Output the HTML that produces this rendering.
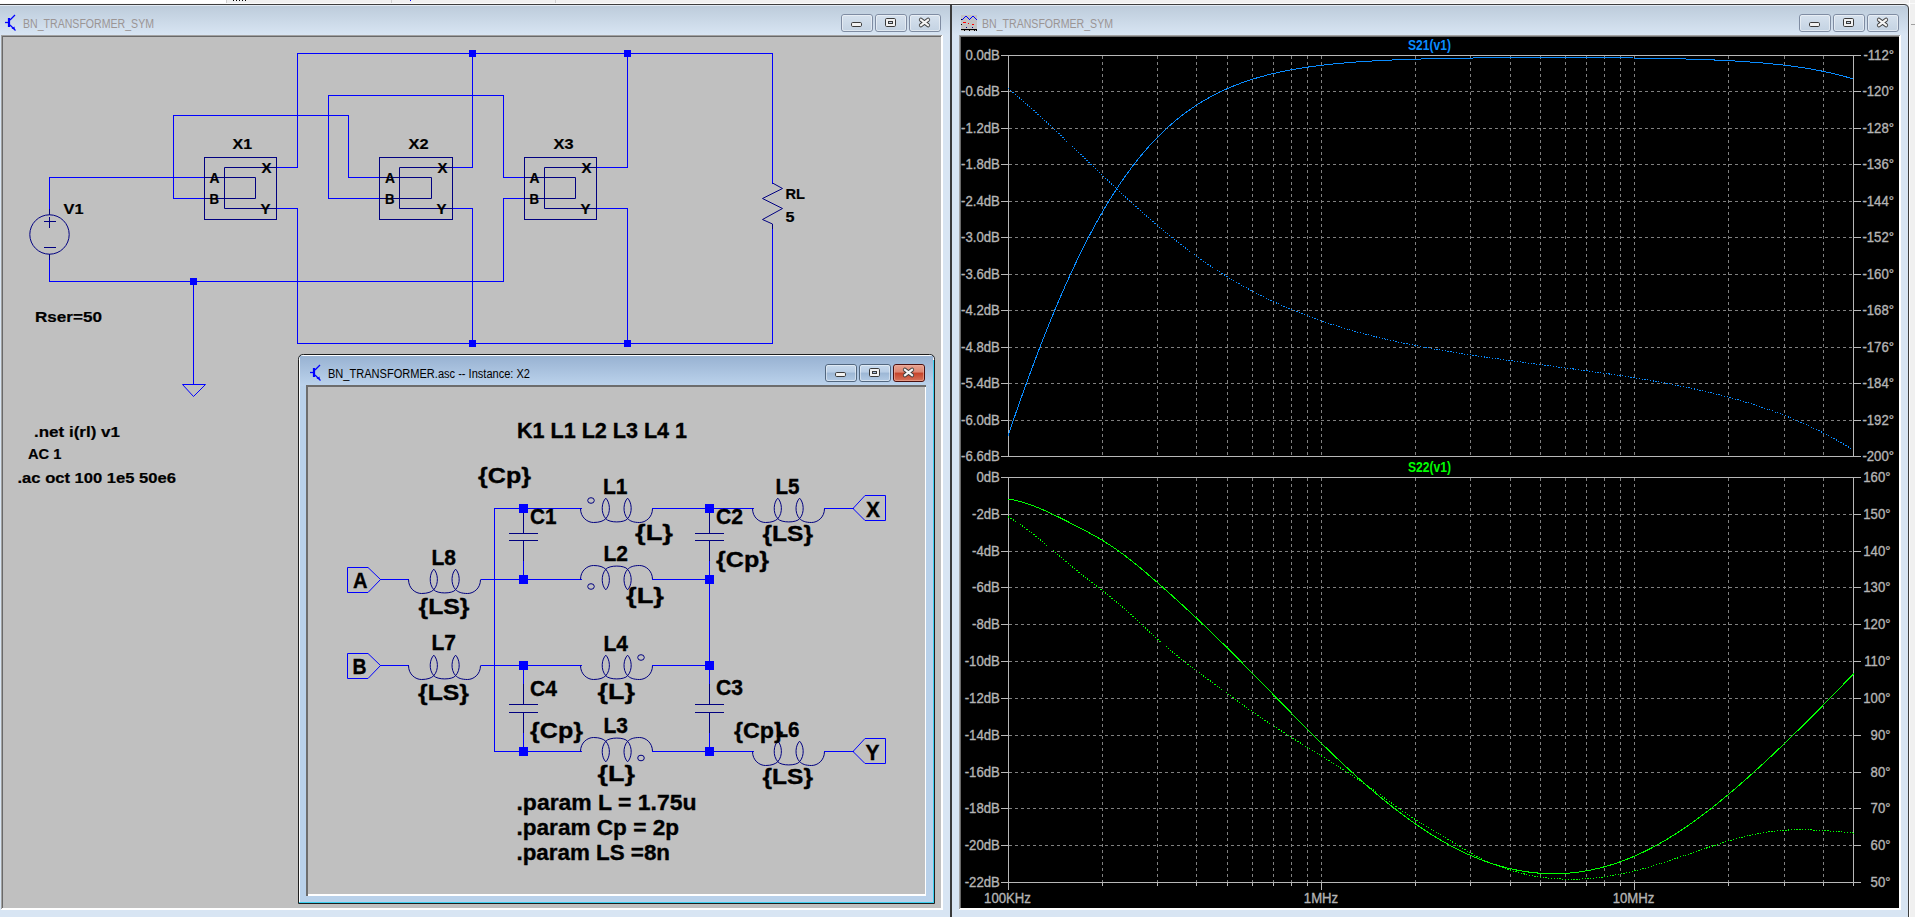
<!DOCTYPE html>
<html><head><meta charset="utf-8"><title>LTspice</title>
<style>html,body{margin:0;padding:0;width:1915px;height:917px;overflow:hidden;background:#f0f0f0;position:relative}</style>
</head><body>
<svg width="1915" height="917" viewBox="0 0 1915 917" style="position:absolute;left:0;top:0;font-family:'Liberation Sans', sans-serif">
<defs>
<linearGradient id="tbIn" x1="0" y1="0" x2="0" y2="1"><stop offset="0" stop-color="#bccbda"/><stop offset="1" stop-color="#d8e5f3"/></linearGradient>
<linearGradient id="tbAct" x1="0" y1="0" x2="0" y2="1"><stop offset="0" stop-color="#98b2d2"/><stop offset="1" stop-color="#bcd3ec"/></linearGradient>
<linearGradient id="btnIn" x1="0" y1="0" x2="0" y2="1"><stop offset="0" stop-color="#d7e2ee"/><stop offset="1" stop-color="#c3d2e2"/></linearGradient>
<linearGradient id="btnAct" x1="0" y1="0" x2="0" y2="1"><stop offset="0" stop-color="#c9dbee"/><stop offset="0.45" stop-color="#b8cde5"/><stop offset="0.5" stop-color="#9db7d5"/><stop offset="1" stop-color="#b3cbe5"/></linearGradient>
<linearGradient id="btnClose" x1="0" y1="0" x2="0" y2="1"><stop offset="0" stop-color="#e9a493"/><stop offset="0.45" stop-color="#dc8672"/><stop offset="0.5" stop-color="#c6432a"/><stop offset="1" stop-color="#d7775f"/></linearGradient>
</defs>
<rect x="0" y="0" width="1915" height="917" fill="#f0f0f0"/>
<rect x="0" y="0" width="226" height="3" fill="#ffffff"/>
<rect x="226" y="0" width="1" height="3" fill="#d0d0d0"/>
<rect x="391" y="0" width="1" height="3" fill="#d0d0d0"/>
<rect x="555" y="0" width="1" height="3" fill="#d0d0d0"/>
<rect x="0" y="3" width="1915" height="1" fill="#fafafa"/>
<rect x="233" y="0" width="1" height="1" fill="#000000"/>
<rect x="236" y="0" width="1" height="1" fill="#000000"/>
<rect x="239" y="0" width="1" height="1" fill="#000000"/>
<rect x="242" y="0" width="1" height="1" fill="#000000"/>
<rect x="245" y="0" width="1" height="1" fill="#000000"/>
<rect x="410" y="0" width="1" height="1" fill="#0000ff"/>
<rect x="1909" y="0" width="1" height="917" fill="#ffffff"/>
<rect x="1911" y="24" width="4" height="1" fill="#a0a0a0"/>
<rect x="0" y="4" width="951" height="913" fill="#d8e5f3"/>
<rect x="0" y="5" width="951" height="30" fill="url(#tbIn)"/>
<rect x="0" y="4" width="951" height="1" fill="#3e3e3e"/>
<rect x="0" y="5" width="951" height="1" fill="#e2eaf3"/>
<rect x="950" y="4" width="1" height="913" fill="#3a3a3a"/>
<rect x="1" y="35" width="942" height="875" fill="#ffffff"/>
<rect x="1" y="35" width="941" height="1" fill="#a2a2a2"/>
<rect x="1" y="35" width="1" height="874" fill="#a2a2a2"/>
<rect x="2" y="36" width="939" height="1" fill="#696969"/>
<rect x="2" y="36" width="1" height="872" fill="#696969"/>
<rect x="3" y="37" width="938" height="871" fill="#c0c0c0"/>
<path d="M951 4 H1904 Q1908 4 1908 8 V917 H951 Z" fill="#d8e5f3"/>
<rect x="951" y="5" width="957" height="30" fill="url(#tbIn)"/>
<rect x="951" y="5" width="954" height="1" fill="#e2eaf3"/>
<path d="M951 4.5 H1904 Q1908.5 4.5 1908.5 9 V917" fill="none" stroke="#3e3e3e" stroke-width="1"/>
<rect x="951" y="4" width="1" height="913" fill="#3a3a3a"/>
<rect x="959" y="35" width="942" height="875" fill="#ffffff"/>
<rect x="959" y="35" width="941" height="1" fill="#a2a2a2"/>
<rect x="959" y="35" width="1" height="874" fill="#a2a2a2"/>
<rect x="960" y="36" width="939" height="1" fill="#696969"/>
<rect x="960" y="36" width="1" height="872" fill="#696969"/>
<rect x="961" y="37" width="938" height="871" fill="#000000"/>
<rect x="841.5" y="14.5" width="31" height="17" rx="2.5" fill="url(#btnIn)" stroke="#7f8ca2"/>
<rect x="842.5" y="15.5" width="29" height="15" rx="1.5" fill="none" stroke="#ffffff" stroke-opacity="0.45"/>
<rect x="851.5" y="22.5" width="10" height="4" rx="1.2" fill="#f2f2f2" stroke="#3a3a3a"/>
<rect x="875.5" y="14.5" width="31" height="17" rx="2.5" fill="url(#btnIn)" stroke="#7f8ca2"/>
<rect x="876.5" y="15.5" width="29" height="15" rx="1.5" fill="none" stroke="#ffffff" stroke-opacity="0.45"/>
<rect x="885.5" y="18.5" width="10" height="8" rx="1.2" fill="#f2f2f2" stroke="#3a3a3a"/>
<rect x="888.5" y="21.5" width="4" height="2" fill="#c5d3e3" stroke="#3a3a3a"/>
<rect x="909.5" y="14.5" width="31" height="17" rx="2.5" fill="url(#btnIn)" stroke="#7f8ca2"/>
<rect x="910.5" y="15.5" width="29" height="15" rx="1.5" fill="none" stroke="#ffffff" stroke-opacity="0.45"/>
<path d="M921 19.8 L928 25.2 M928 19.8 L921 25.2" stroke="#3a3a3a" stroke-width="4.2" stroke-linecap="round"/>
<path d="M921 19.8 L928 25.2 M928 19.8 L921 25.2" stroke="#f4f4f4" stroke-width="2.2" stroke-linecap="square"/>
<rect x="1799.5" y="14.5" width="31" height="17" rx="2.5" fill="url(#btnIn)" stroke="#7f8ca2"/>
<rect x="1800.5" y="15.5" width="29" height="15" rx="1.5" fill="none" stroke="#ffffff" stroke-opacity="0.45"/>
<rect x="1809.5" y="22.5" width="10" height="4" rx="1.2" fill="#f2f2f2" stroke="#3a3a3a"/>
<rect x="1833.5" y="14.5" width="31" height="17" rx="2.5" fill="url(#btnIn)" stroke="#7f8ca2"/>
<rect x="1834.5" y="15.5" width="29" height="15" rx="1.5" fill="none" stroke="#ffffff" stroke-opacity="0.45"/>
<rect x="1843.5" y="18.5" width="10" height="8" rx="1.2" fill="#f2f2f2" stroke="#3a3a3a"/>
<rect x="1846.5" y="21.5" width="4" height="2" fill="#c5d3e3" stroke="#3a3a3a"/>
<rect x="1867.5" y="14.5" width="31" height="17" rx="2.5" fill="url(#btnIn)" stroke="#7f8ca2"/>
<rect x="1868.5" y="15.5" width="29" height="15" rx="1.5" fill="none" stroke="#ffffff" stroke-opacity="0.45"/>
<path d="M1879 19.8 L1886 25.2 M1886 19.8 L1879 25.2" stroke="#3a3a3a" stroke-width="4.2" stroke-linecap="round"/>
<path d="M1879 19.8 L1886 25.2 M1886 19.8 L1879 25.2" stroke="#f4f4f4" stroke-width="2.2" stroke-linecap="square"/>
<g fill="none" stroke="#0000ff"><path d="M5 22.5 H9" stroke-width="1.3"/><path d="M9 18 V27" stroke-width="2.2"/><path d="M10 20 L15 15" stroke-width="1.2"/><path d="M10 25 L15.5 30.5" stroke-width="1.2"/></g><path d="M11.5 28.5 L14.5 26.5 L14.8 29.5 Z" fill="#0000ff"/>
<text x="23" y="27.7" font-size="12" font-weight="normal" fill="#9b9595" text-anchor="start" textLength="131" lengthAdjust="spacingAndGlyphs">BN_TRANSFORMER_SYM</text>
<rect x="961" y="15" width="16" height="16" fill="#c3c3c3"/>
<rect x="962" y="19" width="1" height="1" fill="#0000ff"/>
<rect x="963" y="18" width="1" height="1" fill="#0000ff"/>
<rect x="964" y="17" width="1" height="1" fill="#0000ff"/>
<rect x="965" y="16" width="1" height="1" fill="#0000ff"/>
<rect x="966" y="16" width="1" height="1" fill="#0000ff"/>
<rect x="967" y="17" width="1" height="1" fill="#0000ff"/>
<rect x="968" y="18" width="1" height="1" fill="#0000ff"/>
<rect x="969" y="19" width="1" height="1" fill="#0000ff"/>
<rect x="970" y="18" width="1" height="1" fill="#0000ff"/>
<rect x="971" y="17" width="1" height="1" fill="#0000ff"/>
<rect x="972" y="16" width="1" height="1" fill="#0000ff"/>
<rect x="973" y="16" width="1" height="1" fill="#0000ff"/>
<rect x="974" y="17" width="1" height="1" fill="#0000ff"/>
<rect x="975" y="18" width="1" height="1" fill="#0000ff"/>
<rect x="976" y="19" width="1" height="1" fill="#0000ff"/>
<rect x="961" y="19" width="1" height="1" fill="#000"/>
<rect x="963" y="22" width="3" height="1" fill="#ff0000"/>
<rect x="968" y="23" width="1" height="1" fill="#ff0000"/>
<rect x="972" y="24" width="2" height="1" fill="#ff0000"/>
<rect x="961" y="24" width="1" height="1" fill="#000"/>
<rect x="966" y="27" width="1" height="1" fill="#000080"/>
<rect x="972" y="27" width="1" height="1" fill="#000080"/>
<rect x="961" y="29" width="16" height="1" fill="#000"/>
<rect x="964" y="30" width="1" height="1" fill="#000"/>
<rect x="969" y="30" width="1" height="1" fill="#000"/>
<rect x="974" y="30" width="1" height="1" fill="#000"/>
<rect x="976" y="30" width="1" height="1" fill="#000"/>
<text x="982" y="27.7" font-size="12" font-weight="normal" fill="#9b9595" text-anchor="start" textLength="131" lengthAdjust="spacingAndGlyphs">BN_TRANSFORMER_SYM</text>
<rect x="297" y="53" width="476" height="1" fill="#0000ff"/>
<rect x="297" y="53" width="1" height="115" fill="#0000ff"/>
<rect x="276" y="167" width="22" height="1" fill="#0000ff"/>
<rect x="772" y="53" width="1" height="131" fill="#0000ff"/>
<rect x="772" y="229" width="1" height="115" fill="#0000ff"/>
<rect x="297" y="343" width="476" height="1" fill="#0000ff"/>
<rect x="297" y="208" width="1" height="136" fill="#0000ff"/>
<rect x="276" y="208" width="22" height="1" fill="#0000ff"/>
<rect x="173" y="115" width="176" height="1" fill="#0000ff"/>
<rect x="173" y="115" width="1" height="84" fill="#0000ff"/>
<rect x="173" y="198" width="32" height="1" fill="#0000ff"/>
<rect x="348" y="115" width="1" height="63" fill="#0000ff"/>
<rect x="348" y="177" width="32" height="1" fill="#0000ff"/>
<rect x="328" y="95" width="176" height="1" fill="#0000ff"/>
<rect x="328" y="95" width="1" height="104" fill="#0000ff"/>
<rect x="328" y="198" width="52" height="1" fill="#0000ff"/>
<rect x="503" y="95" width="1" height="83" fill="#0000ff"/>
<rect x="503" y="177" width="22" height="1" fill="#0000ff"/>
<rect x="49" y="177" width="156" height="1" fill="#0000ff"/>
<rect x="49" y="177" width="1" height="33" fill="#0000ff"/>
<rect x="49" y="259" width="1" height="23" fill="#0000ff"/>
<rect x="49" y="281" width="455" height="1" fill="#0000ff"/>
<rect x="503" y="198" width="1" height="84" fill="#0000ff"/>
<rect x="503" y="198" width="22" height="1" fill="#0000ff"/>
<rect x="193" y="281" width="1" height="104" fill="#0000ff"/>
<rect x="452" y="167" width="21" height="1" fill="#0000ff"/>
<rect x="472" y="53" width="1" height="115" fill="#0000ff"/>
<rect x="452" y="208" width="21" height="1" fill="#0000ff"/>
<rect x="472" y="208" width="1" height="136" fill="#0000ff"/>
<rect x="597" y="167" width="31" height="1" fill="#0000ff"/>
<rect x="627" y="53" width="1" height="115" fill="#0000ff"/>
<rect x="597" y="208" width="31" height="1" fill="#0000ff"/>
<rect x="627" y="208" width="1" height="136" fill="#0000ff"/>
<rect x="469" y="50" width="7" height="7" fill="#0000ff"/>
<rect x="624" y="50" width="7" height="7" fill="#0000ff"/>
<rect x="469" y="340" width="7" height="7" fill="#0000ff"/>
<rect x="624" y="340" width="7" height="7" fill="#0000ff"/>
<rect x="190" y="278" width="7" height="7" fill="#0000ff"/>
<path d="M182.5 384.5 H205.5 L193.5 396.5 Z" fill="none" stroke="#0000ff" stroke-width="1"/>
<rect x="204.5" y="157.5" width="72" height="62" fill="none" stroke="#000080"/>
<path d="M204 177.5 H255.5 V198.5 H204" fill="none" stroke="#000080"/>
<path d="M276 167.5 H224.5 V208.5 H276" fill="none" stroke="#000080"/>
<text x="209.5" y="183" font-size="15" font-weight="bold" fill="#000" text-anchor="start" textLength="10" lengthAdjust="spacingAndGlyphs" stroke="#000" stroke-width="0.2">A</text>
<text x="209.5" y="204" font-size="15" font-weight="bold" fill="#000" text-anchor="start" textLength="9.5" lengthAdjust="spacingAndGlyphs" stroke="#000" stroke-width="0.2">B</text>
<text x="261.5" y="173" font-size="15" font-weight="bold" fill="#000" text-anchor="start" textLength="10" lengthAdjust="spacingAndGlyphs" stroke="#000" stroke-width="0.2">X</text>
<text x="260.5" y="214" font-size="15" font-weight="bold" fill="#000" text-anchor="start" textLength="10" lengthAdjust="spacingAndGlyphs" stroke="#000" stroke-width="0.2">Y</text>
<rect x="379.5" y="157.5" width="73" height="62" fill="none" stroke="#000080"/>
<path d="M379 177.5 H431.5 V198.5 H379" fill="none" stroke="#000080"/>
<path d="M452 167.5 H399.5 V208.5 H452" fill="none" stroke="#000080"/>
<text x="385.0" y="183" font-size="15" font-weight="bold" fill="#000" text-anchor="start" textLength="10" lengthAdjust="spacingAndGlyphs" stroke="#000" stroke-width="0.2">A</text>
<text x="385.0" y="204" font-size="15" font-weight="bold" fill="#000" text-anchor="start" textLength="9.5" lengthAdjust="spacingAndGlyphs" stroke="#000" stroke-width="0.2">B</text>
<text x="437.5" y="173" font-size="15" font-weight="bold" fill="#000" text-anchor="start" textLength="10" lengthAdjust="spacingAndGlyphs" stroke="#000" stroke-width="0.2">X</text>
<text x="436.5" y="214" font-size="15" font-weight="bold" fill="#000" text-anchor="start" textLength="10" lengthAdjust="spacingAndGlyphs" stroke="#000" stroke-width="0.2">Y</text>
<rect x="524.5" y="157.5" width="72" height="62" fill="none" stroke="#000080"/>
<path d="M524 177.5 H575.5 V198.5 H524" fill="none" stroke="#000080"/>
<path d="M596 167.5 H544.5 V208.5 H596" fill="none" stroke="#000080"/>
<text x="529.5" y="183" font-size="15" font-weight="bold" fill="#000" text-anchor="start" textLength="10" lengthAdjust="spacingAndGlyphs" stroke="#000" stroke-width="0.2">A</text>
<text x="529.5" y="204" font-size="15" font-weight="bold" fill="#000" text-anchor="start" textLength="9.5" lengthAdjust="spacingAndGlyphs" stroke="#000" stroke-width="0.2">B</text>
<text x="581.5" y="173" font-size="15" font-weight="bold" fill="#000" text-anchor="start" textLength="10" lengthAdjust="spacingAndGlyphs" stroke="#000" stroke-width="0.2">X</text>
<text x="580.5" y="214" font-size="15" font-weight="bold" fill="#000" text-anchor="start" textLength="10" lengthAdjust="spacingAndGlyphs" stroke="#000" stroke-width="0.2">Y</text>
<text x="232.5" y="149" font-size="15.5" font-weight="bold" fill="#000" text-anchor="start" textLength="19.5" lengthAdjust="spacingAndGlyphs" stroke="#000" stroke-width="0.2">X1</text>
<text x="408.5" y="149" font-size="15.5" font-weight="bold" fill="#000" text-anchor="start" textLength="20" lengthAdjust="spacingAndGlyphs" stroke="#000" stroke-width="0.2">X2</text>
<text x="553.5" y="149" font-size="15.5" font-weight="bold" fill="#000" text-anchor="start" textLength="20" lengthAdjust="spacingAndGlyphs" stroke="#000" stroke-width="0.2">X3</text>
<rect x="49" y="209" width="1" height="6" fill="#000080"/>
<rect x="49" y="254" width="1" height="6" fill="#000080"/>
<circle cx="49.5" cy="234.5" r="19.7" fill="none" stroke="#000080"/>
<rect x="44" y="221" width="12" height="1" fill="#000080"/>
<rect x="49" y="217" width="1" height="11" fill="#000080"/>
<rect x="44" y="247" width="12" height="1" fill="#000080"/>
<text x="63.5" y="214" font-size="15.5" font-weight="bold" fill="#000" text-anchor="start" textLength="20" lengthAdjust="spacingAndGlyphs" stroke="#000" stroke-width="0.2">V1</text>
<text x="35" y="322" font-size="15.5" font-weight="bold" fill="#000" text-anchor="start" textLength="67" lengthAdjust="spacingAndGlyphs" stroke="#000" stroke-width="0.2">Rser=50</text>
<path d="M772.5 183 L782.5 188.5 L762.5 198.5 L782.5 208.5 L762.5 219.5 L772.5 224 V229" fill="none" stroke="#000080"/>
<text x="785.5" y="199" font-size="15.5" font-weight="bold" fill="#000" text-anchor="start" textLength="19.5" lengthAdjust="spacingAndGlyphs" stroke="#000" stroke-width="0.2">RL</text>
<text x="785.5" y="222" font-size="15.5" font-weight="bold" fill="#000" text-anchor="start" textLength="9" lengthAdjust="spacingAndGlyphs" stroke="#000" stroke-width="0.2">5</text>
<text x="34" y="437" font-size="15.5" font-weight="bold" fill="#000" text-anchor="start" textLength="86" lengthAdjust="spacingAndGlyphs" stroke="#000" stroke-width="0.2">.net i(rl) v1</text>
<text x="28" y="459" font-size="15.5" font-weight="bold" fill="#000" text-anchor="start" textLength="33.5" lengthAdjust="spacingAndGlyphs" stroke="#000" stroke-width="0.2">AC 1</text>
<text x="17.5" y="483" font-size="15.5" font-weight="bold" fill="#000" text-anchor="start" textLength="158.5" lengthAdjust="spacingAndGlyphs" stroke="#000" stroke-width="0.2">.ac oct 100 1e5 50e6</text>
<path d="M298.5 903.5 V359.5 Q298.5 354.5 303.5 354.5 H929.5 Q934.5 354.5 934.5 359.5 V903.5 Z" fill="#b9d1ea" stroke="#1e1e1e"/>
<path d="M299.5 903 V360 Q299.5 355.5 304 355.5 H929 Q933.5 355.5 933.5 360" fill="none" stroke="#ffffff" stroke-width="1"/>
<rect x="300" y="356" width="633" height="30" fill="url(#tbAct)"/>
<rect x="933" y="360" width="1" height="543" fill="#3ad0f0"/>
<rect x="299" y="902" width="635" height="1" fill="#3ad0f0"/>
<rect x="306" y="385" width="620" height="511" fill="#6d6d6d"/>
<rect x="308" y="387" width="618" height="509" fill="#ffffff"/>
<rect x="308" y="387" width="617" height="507" fill="#c0c0c0"/>
<rect x="825.5" y="364.5" width="31" height="17" rx="2.5" fill="url(#btnAct)" stroke="#52677f"/>
<rect x="826.5" y="365.5" width="29" height="15" rx="1.5" fill="none" stroke="#ffffff" stroke-opacity="0.45"/>
<rect x="835.5" y="372.5" width="10" height="4" rx="1.2" fill="#f2f2f2" stroke="#3a3a3a"/>
<rect x="859.5" y="364.5" width="31" height="17" rx="2.5" fill="url(#btnAct)" stroke="#52677f"/>
<rect x="860.5" y="365.5" width="29" height="15" rx="1.5" fill="none" stroke="#ffffff" stroke-opacity="0.45"/>
<rect x="869.5" y="368.5" width="10" height="8" rx="1.2" fill="#f2f2f2" stroke="#3a3a3a"/>
<rect x="872.5" y="371.5" width="4" height="2" fill="#a9c0dc" stroke="#3a3a3a"/>
<rect x="893.5" y="364.5" width="31" height="17" rx="2.5" fill="url(#btnClose)" stroke="#4a1010"/>
<rect x="894.5" y="365.5" width="29" height="15" rx="1.5" fill="none" stroke="#f0b0a0" stroke-opacity="0.6"/>
<path d="M905 369.8 L912 375.2 M912 369.8 L905 375.2" stroke="#3a3a3a" stroke-width="4.2" stroke-linecap="round"/>
<path d="M905 369.8 L912 375.2 M912 369.8 L905 375.2" stroke="#f4f4f4" stroke-width="2.2" stroke-linecap="square"/>
<g fill="none" stroke="#0000ff"><path d="M310 372.5 H314" stroke-width="1.3"/><path d="M314 368 V377" stroke-width="2.2"/><path d="M315 370 L320 365" stroke-width="1.2"/><path d="M315 375 L320.5 380.5" stroke-width="1.2"/></g><path d="M316.5 378.5 L319.5 376.5 L319.8 379.5 Z" fill="#0000ff"/>
<text x="328" y="377.8" font-size="12" font-weight="normal" fill="#000000" text-anchor="start" textLength="202" lengthAdjust="spacingAndGlyphs">BN_TRANSFORMER.asc -- Instance: X2</text>
<path d="M347.5 567.5 H368 L380.5 579.5 L368 592.5 H347.5 Z" fill="none" stroke="#0000ff" stroke-width="1"/>
<rect x="380" y="579" width="29" height="1" fill="#0000ff"/>
<path d="M408.50 579.50 C408.50 588.50 415.50 593.50 421.50 593.50 C427.50 593.50 431.50 592.00 433.80 589.70 C439.30 583.50 437.80 573.00 433.80 569.20 C429.80 573.00 428.30 583.50 433.80 589.70 C437.00 594.00 452.50 594.00 455.60 589.70 C461.10 583.50 459.60 573.00 455.60 569.20 C451.60 573.00 450.10 583.50 455.60 589.70 C458.00 592.00 461.50 593.50 467.50 593.50 C473.50 593.50 480.50 588.50 480.50 579.50" fill="none" stroke="#000080" stroke-width="1"/>
<rect x="481" y="579" width="101" height="1" fill="#0000ff"/>
<path d="M580.50 579.50 C580.50 570.50 587.50 565.50 593.50 565.50 C599.50 565.50 603.50 567.00 605.80 569.30 C611.30 575.50 609.80 586.00 605.80 589.80 C601.80 586.00 600.30 575.50 605.80 569.30 C609.00 565.00 624.50 565.00 627.60 569.30 C633.10 575.50 631.60 586.00 627.60 589.80 C623.60 586.00 622.10 575.50 627.60 569.30 C630.00 567.00 633.50 565.50 639.50 565.50 C645.50 565.50 652.50 570.50 652.50 579.50" fill="none" stroke="#000080" stroke-width="1"/>
<ellipse cx="591" cy="586.5" rx="3.3" ry="2.8" fill="none" stroke="#000080" stroke-width="1"/>
<rect x="652" y="579" width="58" height="1" fill="#0000ff"/>
<path d="M347.5 653.5 H368 L380.5 665.5 L368 678.5 H347.5 Z" fill="none" stroke="#0000ff" stroke-width="1"/>
<rect x="380" y="665" width="29" height="1" fill="#0000ff"/>
<path d="M408.50 665.50 C408.50 674.50 415.50 679.50 421.50 679.50 C427.50 679.50 431.50 678.00 433.80 675.70 C439.30 669.50 437.80 659.00 433.80 655.20 C429.80 659.00 428.30 669.50 433.80 675.70 C437.00 680.00 452.50 680.00 455.60 675.70 C461.10 669.50 459.60 659.00 455.60 655.20 C451.60 659.00 450.10 669.50 455.60 675.70 C458.00 678.00 461.50 679.50 467.50 679.50 C473.50 679.50 480.50 674.50 480.50 665.50" fill="none" stroke="#000080" stroke-width="1"/>
<rect x="481" y="665" width="101" height="1" fill="#0000ff"/>
<path d="M580.50 665.50 C580.50 674.50 587.50 679.50 593.50 679.50 C599.50 679.50 603.50 678.00 605.80 675.70 C611.30 669.50 609.80 659.00 605.80 655.20 C601.80 659.00 600.30 669.50 605.80 675.70 C609.00 680.00 624.50 680.00 627.60 675.70 C633.10 669.50 631.60 659.00 627.60 655.20 C623.60 659.00 622.10 669.50 627.60 675.70 C630.00 678.00 633.50 679.50 639.50 679.50 C645.50 679.50 652.50 674.50 652.50 665.50" fill="none" stroke="#000080" stroke-width="1"/>
<ellipse cx="641" cy="657.5" rx="3.3" ry="2.8" fill="none" stroke="#000080" stroke-width="1"/>
<rect x="652" y="665" width="58" height="1" fill="#0000ff"/>
<rect x="494" y="508" width="88" height="1" fill="#0000ff"/>
<path d="M580.50 508.50 C580.50 517.50 587.50 522.50 593.50 522.50 C599.50 522.50 603.50 521.00 605.80 518.70 C611.30 512.50 609.80 502.00 605.80 498.20 C601.80 502.00 600.30 512.50 605.80 518.70 C609.00 523.00 624.50 523.00 627.60 518.70 C633.10 512.50 631.60 502.00 627.60 498.20 C623.60 502.00 622.10 512.50 627.60 518.70 C630.00 521.00 633.50 522.50 639.50 522.50 C645.50 522.50 652.50 517.50 652.50 508.50" fill="none" stroke="#000080" stroke-width="1"/>
<ellipse cx="591" cy="500.5" rx="3.3" ry="2.8" fill="none" stroke="#000080" stroke-width="1"/>
<rect x="652" y="508" width="102" height="1" fill="#0000ff"/>
<path d="M752.50 508.50 C752.50 517.50 759.50 522.50 765.50 522.50 C771.50 522.50 775.50 521.00 777.80 518.70 C783.30 512.50 781.80 502.00 777.80 498.20 C773.80 502.00 772.30 512.50 777.80 518.70 C781.00 523.00 796.50 523.00 799.60 518.70 C805.10 512.50 803.60 502.00 799.60 498.20 C795.60 502.00 794.10 512.50 799.60 518.70 C802.00 521.00 805.50 522.50 811.50 522.50 C817.50 522.50 824.50 517.50 824.50 508.50" fill="none" stroke="#000080" stroke-width="1"/>
<rect x="824" y="508" width="30" height="1" fill="#0000ff"/>
<path d="M853 508.5 L865 495.5 H885.5 V520.5 H865 Z" fill="none" stroke="#0000ff" stroke-width="1"/>
<rect x="494" y="751" width="88" height="1" fill="#0000ff"/>
<path d="M580.50 751.50 C580.50 742.50 587.50 737.50 593.50 737.50 C599.50 737.50 603.50 739.00 605.80 741.30 C611.30 747.50 609.80 758.00 605.80 761.80 C601.80 758.00 600.30 747.50 605.80 741.30 C609.00 737.00 624.50 737.00 627.60 741.30 C633.10 747.50 631.60 758.00 627.60 761.80 C623.60 758.00 622.10 747.50 627.60 741.30 C630.00 739.00 633.50 737.50 639.50 737.50 C645.50 737.50 652.50 742.50 652.50 751.50" fill="none" stroke="#000080" stroke-width="1"/>
<ellipse cx="641" cy="758" rx="3.3" ry="2.8" fill="none" stroke="#000080" stroke-width="1"/>
<rect x="652" y="751" width="102" height="1" fill="#0000ff"/>
<path d="M752.50 751.50 C752.50 760.50 759.50 765.50 765.50 765.50 C771.50 765.50 775.50 764.00 777.80 761.70 C783.30 755.50 781.80 745.00 777.80 741.20 C773.80 745.00 772.30 755.50 777.80 761.70 C781.00 766.00 796.50 766.00 799.60 761.70 C805.10 755.50 803.60 745.00 799.60 741.20 C795.60 745.00 794.10 755.50 799.60 761.70 C802.00 764.00 805.50 765.50 811.50 765.50 C817.50 765.50 824.50 760.50 824.50 751.50" fill="none" stroke="#000080" stroke-width="1"/>
<rect x="824" y="751" width="30" height="1" fill="#0000ff"/>
<path d="M853 751.5 L865 738.5 H885.5 V763.5 H865 Z" fill="none" stroke="#0000ff" stroke-width="1"/>
<rect x="494" y="508" width="1" height="244" fill="#0000ff"/>
<rect x="523" y="508" width="1" height="5" fill="#0000ff"/>
<rect x="523" y="513" width="1" height="21" fill="#000080"/>
<rect x="509" y="533" width="29" height="1" fill="#000080"/>
<rect x="509" y="540" width="29" height="1" fill="#000080"/>
<rect x="523" y="540" width="1" height="21" fill="#000080"/>
<rect x="523" y="561" width="1" height="19" fill="#0000ff"/>
<rect x="709" y="508" width="1" height="5" fill="#0000ff"/>
<rect x="709" y="513" width="1" height="21" fill="#000080"/>
<rect x="695" y="533" width="29" height="1" fill="#000080"/>
<rect x="695" y="540" width="29" height="1" fill="#000080"/>
<rect x="709" y="540" width="1" height="21" fill="#000080"/>
<rect x="709" y="561" width="1" height="19" fill="#0000ff"/>
<rect x="709" y="579" width="1" height="87" fill="#0000ff"/>
<rect x="523" y="665" width="1" height="19" fill="#0000ff"/>
<rect x="523" y="684" width="1" height="21" fill="#000080"/>
<rect x="509" y="704" width="29" height="1" fill="#000080"/>
<rect x="509" y="712" width="29" height="1" fill="#000080"/>
<rect x="523" y="712" width="1" height="21" fill="#000080"/>
<rect x="523" y="733" width="1" height="19" fill="#0000ff"/>
<rect x="709" y="665" width="1" height="19" fill="#0000ff"/>
<rect x="709" y="684" width="1" height="21" fill="#000080"/>
<rect x="695" y="704" width="29" height="1" fill="#000080"/>
<rect x="695" y="712" width="29" height="1" fill="#000080"/>
<rect x="709" y="712" width="1" height="21" fill="#000080"/>
<rect x="709" y="733" width="1" height="19" fill="#0000ff"/>
<rect x="519" y="504" width="9" height="9" fill="#0000ff"/>
<rect x="519" y="575" width="9" height="9" fill="#0000ff"/>
<rect x="705" y="504" width="9" height="9" fill="#0000ff"/>
<rect x="705" y="575" width="9" height="9" fill="#0000ff"/>
<rect x="519" y="661" width="9" height="9" fill="#0000ff"/>
<rect x="519" y="747" width="9" height="9" fill="#0000ff"/>
<rect x="705" y="661" width="9" height="9" fill="#0000ff"/>
<rect x="705" y="747" width="9" height="9" fill="#0000ff"/>
<text x="353" y="588" font-size="22" font-weight="bold" fill="#000" text-anchor="start" textLength="14.5" lengthAdjust="spacingAndGlyphs" stroke="#000" stroke-width="0.35">A</text>
<text x="352.5" y="674" font-size="22" font-weight="bold" fill="#000" text-anchor="start" textLength="14" lengthAdjust="spacingAndGlyphs" stroke="#000" stroke-width="0.35">B</text>
<text x="866" y="517" font-size="22" font-weight="bold" fill="#000" text-anchor="start" textLength="14" lengthAdjust="spacingAndGlyphs" stroke="#000" stroke-width="0.35">X</text>
<text x="865.5" y="760" font-size="22" font-weight="bold" fill="#000" text-anchor="start" textLength="14" lengthAdjust="spacingAndGlyphs" stroke="#000" stroke-width="0.35">Y</text>
<text x="517" y="438" font-size="22" font-weight="bold" fill="#000" text-anchor="start" textLength="170" lengthAdjust="spacingAndGlyphs" stroke="#000" stroke-width="0.35">K1 L1 L2 L3 L4 1</text>
<text x="478" y="483" font-size="22" font-weight="bold" fill="#000" text-anchor="start" textLength="53" lengthAdjust="spacingAndGlyphs" stroke="#000" stroke-width="0.35">{Cp}</text>
<text x="530" y="524" font-size="22" font-weight="bold" fill="#000" text-anchor="start" textLength="26.5" lengthAdjust="spacingAndGlyphs" stroke="#000" stroke-width="0.35">C1</text>
<text x="603" y="494" font-size="22" font-weight="bold" fill="#000" text-anchor="start" textLength="24.5" lengthAdjust="spacingAndGlyphs" stroke="#000" stroke-width="0.35">L1</text>
<text x="635" y="540" font-size="22" font-weight="bold" fill="#000" text-anchor="start" textLength="38" lengthAdjust="spacingAndGlyphs" stroke="#000" stroke-width="0.35">{L}</text>
<text x="431.5" y="565" font-size="22" font-weight="bold" fill="#000" text-anchor="start" textLength="24.5" lengthAdjust="spacingAndGlyphs" stroke="#000" stroke-width="0.35">L8</text>
<text x="603.5" y="561" font-size="22" font-weight="bold" fill="#000" text-anchor="start" textLength="24.5" lengthAdjust="spacingAndGlyphs" stroke="#000" stroke-width="0.35">L2</text>
<text x="626" y="603" font-size="22" font-weight="bold" fill="#000" text-anchor="start" textLength="38" lengthAdjust="spacingAndGlyphs" stroke="#000" stroke-width="0.35">{L}</text>
<text x="418.5" y="614" font-size="22" font-weight="bold" fill="#000" text-anchor="start" textLength="51" lengthAdjust="spacingAndGlyphs" stroke="#000" stroke-width="0.35">{LS}</text>
<text x="716" y="524" font-size="22" font-weight="bold" fill="#000" text-anchor="start" textLength="27" lengthAdjust="spacingAndGlyphs" stroke="#000" stroke-width="0.35">C2</text>
<text x="716" y="567" font-size="22" font-weight="bold" fill="#000" text-anchor="start" textLength="53" lengthAdjust="spacingAndGlyphs" stroke="#000" stroke-width="0.35">{Cp}</text>
<text x="775.5" y="494" font-size="22" font-weight="bold" fill="#000" text-anchor="start" textLength="24" lengthAdjust="spacingAndGlyphs" stroke="#000" stroke-width="0.35">L5</text>
<text x="762.5" y="541" font-size="22" font-weight="bold" fill="#000" text-anchor="start" textLength="50.5" lengthAdjust="spacingAndGlyphs" stroke="#000" stroke-width="0.35">{LS}</text>
<text x="431.5" y="650" font-size="22" font-weight="bold" fill="#000" text-anchor="start" textLength="24.5" lengthAdjust="spacingAndGlyphs" stroke="#000" stroke-width="0.35">L7</text>
<text x="418" y="700" font-size="22" font-weight="bold" fill="#000" text-anchor="start" textLength="51" lengthAdjust="spacingAndGlyphs" stroke="#000" stroke-width="0.35">{LS}</text>
<text x="603.5" y="651" font-size="22" font-weight="bold" fill="#000" text-anchor="start" textLength="24.5" lengthAdjust="spacingAndGlyphs" stroke="#000" stroke-width="0.35">L4</text>
<text x="597.5" y="699" font-size="22" font-weight="bold" fill="#000" text-anchor="start" textLength="37.5" lengthAdjust="spacingAndGlyphs" stroke="#000" stroke-width="0.35">{L}</text>
<text x="530" y="696" font-size="22" font-weight="bold" fill="#000" text-anchor="start" textLength="27" lengthAdjust="spacingAndGlyphs" stroke="#000" stroke-width="0.35">C4</text>
<text x="530" y="738" font-size="22" font-weight="bold" fill="#000" text-anchor="start" textLength="53" lengthAdjust="spacingAndGlyphs" stroke="#000" stroke-width="0.35">{Cp}</text>
<text x="716" y="695" font-size="22" font-weight="bold" fill="#000" text-anchor="start" textLength="27" lengthAdjust="spacingAndGlyphs" stroke="#000" stroke-width="0.35">C3</text>
<text x="603.5" y="733" font-size="22" font-weight="bold" fill="#000" text-anchor="start" textLength="24.5" lengthAdjust="spacingAndGlyphs" stroke="#000" stroke-width="0.35">L3</text>
<text x="597.5" y="781" font-size="22" font-weight="bold" fill="#000" text-anchor="start" textLength="37.5" lengthAdjust="spacingAndGlyphs" stroke="#000" stroke-width="0.35">{L}</text>
<text x="734" y="738" font-size="22" font-weight="bold" fill="#000" text-anchor="start" textLength="49" lengthAdjust="spacingAndGlyphs" stroke="#000" stroke-width="0.35">{Cp}</text>
<text x="775.5" y="737" font-size="22" font-weight="bold" fill="#000" text-anchor="start" textLength="24" lengthAdjust="spacingAndGlyphs" stroke="#000" stroke-width="0.35">L6</text>
<text x="762.5" y="784" font-size="22" font-weight="bold" fill="#000" text-anchor="start" textLength="50.5" lengthAdjust="spacingAndGlyphs" stroke="#000" stroke-width="0.35">{LS}</text>
<text x="516.5" y="810" font-size="22" font-weight="bold" fill="#000" text-anchor="start" textLength="180" lengthAdjust="spacingAndGlyphs" stroke="#000" stroke-width="0.35">.param L = 1.75u</text>
<text x="516.5" y="835" font-size="22" font-weight="bold" fill="#000" text-anchor="start" textLength="162.5" lengthAdjust="spacingAndGlyphs" stroke="#000" stroke-width="0.35">.param Cp = 2p</text>
<text x="516.5" y="860" font-size="22" font-weight="bold" fill="#000" text-anchor="start" textLength="153.5" lengthAdjust="spacingAndGlyphs" stroke="#000" stroke-width="0.35">.param LS =8n</text>
<line x1="1009" y1="91.5" x2="1853" y2="91.5" stroke="#808080" stroke-dasharray="3 3"/>
<line x1="1009" y1="128.5" x2="1853" y2="128.5" stroke="#808080" stroke-dasharray="3 3"/>
<line x1="1009" y1="164.5" x2="1853" y2="164.5" stroke="#808080" stroke-dasharray="3 3"/>
<line x1="1009" y1="201.5" x2="1853" y2="201.5" stroke="#808080" stroke-dasharray="3 3"/>
<line x1="1009" y1="237.5" x2="1853" y2="237.5" stroke="#808080" stroke-dasharray="3 3"/>
<line x1="1009" y1="274.5" x2="1853" y2="274.5" stroke="#808080" stroke-dasharray="3 3"/>
<line x1="1009" y1="310.5" x2="1853" y2="310.5" stroke="#808080" stroke-dasharray="3 3"/>
<line x1="1009" y1="347.5" x2="1853" y2="347.5" stroke="#808080" stroke-dasharray="3 3"/>
<line x1="1009" y1="383.5" x2="1853" y2="383.5" stroke="#808080" stroke-dasharray="3 3"/>
<line x1="1009" y1="420.5" x2="1853" y2="420.5" stroke="#808080" stroke-dasharray="3 3"/>
<line x1="1102.5" y1="56" x2="1102.5" y2="456" stroke="#808080" stroke-dasharray="3 3"/>
<line x1="1157.5" y1="56" x2="1157.5" y2="456" stroke="#808080" stroke-dasharray="3 3"/>
<line x1="1196.5" y1="56" x2="1196.5" y2="456" stroke="#808080" stroke-dasharray="3 3"/>
<line x1="1227.5" y1="56" x2="1227.5" y2="456" stroke="#808080" stroke-dasharray="3 3"/>
<line x1="1252.5" y1="56" x2="1252.5" y2="456" stroke="#808080" stroke-dasharray="3 3"/>
<line x1="1273.5" y1="56" x2="1273.5" y2="456" stroke="#808080" stroke-dasharray="3 3"/>
<line x1="1291.5" y1="56" x2="1291.5" y2="456" stroke="#808080" stroke-dasharray="3 3"/>
<line x1="1307.5" y1="56" x2="1307.5" y2="456" stroke="#808080" stroke-dasharray="3 3"/>
<line x1="1321.5" y1="56" x2="1321.5" y2="456" stroke="#808080" stroke-dasharray="3 3"/>
<line x1="1415.5" y1="56" x2="1415.5" y2="456" stroke="#808080" stroke-dasharray="3 3"/>
<line x1="1470.5" y1="56" x2="1470.5" y2="456" stroke="#808080" stroke-dasharray="3 3"/>
<line x1="1510.5" y1="56" x2="1510.5" y2="456" stroke="#808080" stroke-dasharray="3 3"/>
<line x1="1540.5" y1="56" x2="1540.5" y2="456" stroke="#808080" stroke-dasharray="3 3"/>
<line x1="1565.5" y1="56" x2="1565.5" y2="456" stroke="#808080" stroke-dasharray="3 3"/>
<line x1="1586.5" y1="56" x2="1586.5" y2="456" stroke="#808080" stroke-dasharray="3 3"/>
<line x1="1604.5" y1="56" x2="1604.5" y2="456" stroke="#808080" stroke-dasharray="3 3"/>
<line x1="1620.5" y1="56" x2="1620.5" y2="456" stroke="#808080" stroke-dasharray="3 3"/>
<line x1="1634.5" y1="56" x2="1634.5" y2="456" stroke="#808080" stroke-dasharray="3 3"/>
<line x1="1728.5" y1="56" x2="1728.5" y2="456" stroke="#808080" stroke-dasharray="3 3"/>
<line x1="1784.5" y1="56" x2="1784.5" y2="456" stroke="#808080" stroke-dasharray="3 3"/>
<line x1="1823.5" y1="56" x2="1823.5" y2="456" stroke="#808080" stroke-dasharray="3 3"/>
<rect x="1001" y="55" width="860" height="1" fill="#b8b8b8"/>
<rect x="1001" y="456" width="860" height="1" fill="#b8b8b8"/>
<rect x="1008" y="55" width="1" height="402" fill="#b8b8b8"/>
<rect x="1853" y="55" width="1" height="402" fill="#b8b8b8"/>
<rect x="1001" y="91" width="8" height="1" fill="#b8b8b8"/>
<rect x="1853" y="91" width="8" height="1" fill="#b8b8b8"/>
<rect x="1001" y="128" width="8" height="1" fill="#b8b8b8"/>
<rect x="1853" y="128" width="8" height="1" fill="#b8b8b8"/>
<rect x="1001" y="164" width="8" height="1" fill="#b8b8b8"/>
<rect x="1853" y="164" width="8" height="1" fill="#b8b8b8"/>
<rect x="1001" y="201" width="8" height="1" fill="#b8b8b8"/>
<rect x="1853" y="201" width="8" height="1" fill="#b8b8b8"/>
<rect x="1001" y="237" width="8" height="1" fill="#b8b8b8"/>
<rect x="1853" y="237" width="8" height="1" fill="#b8b8b8"/>
<rect x="1001" y="274" width="8" height="1" fill="#b8b8b8"/>
<rect x="1853" y="274" width="8" height="1" fill="#b8b8b8"/>
<rect x="1001" y="310" width="8" height="1" fill="#b8b8b8"/>
<rect x="1853" y="310" width="8" height="1" fill="#b8b8b8"/>
<rect x="1001" y="347" width="8" height="1" fill="#b8b8b8"/>
<rect x="1853" y="347" width="8" height="1" fill="#b8b8b8"/>
<rect x="1001" y="383" width="8" height="1" fill="#b8b8b8"/>
<rect x="1853" y="383" width="8" height="1" fill="#b8b8b8"/>
<rect x="1001" y="420" width="8" height="1" fill="#b8b8b8"/>
<rect x="1853" y="420" width="8" height="1" fill="#b8b8b8"/>
<text transform="translate(999.8 60) scale(0.94 1)" font-size="14" fill="#b4b4b4" stroke="#b4b4b4" stroke-width="0.35" text-anchor="end">0.0dB</text>
<text transform="translate(1894 60) scale(0.94 1)" font-size="14" fill="#b4b4b4" stroke="#b4b4b4" stroke-width="0.35" text-anchor="end">-112°</text>
<text transform="translate(999.8 96) scale(0.94 1)" font-size="14" fill="#b4b4b4" stroke="#b4b4b4" stroke-width="0.35" text-anchor="end">-0.6dB</text>
<text transform="translate(1894 96) scale(0.94 1)" font-size="14" fill="#b4b4b4" stroke="#b4b4b4" stroke-width="0.35" text-anchor="end">-120°</text>
<text transform="translate(999.8 133) scale(0.94 1)" font-size="14" fill="#b4b4b4" stroke="#b4b4b4" stroke-width="0.35" text-anchor="end">-1.2dB</text>
<text transform="translate(1894 133) scale(0.94 1)" font-size="14" fill="#b4b4b4" stroke="#b4b4b4" stroke-width="0.35" text-anchor="end">-128°</text>
<text transform="translate(999.8 169) scale(0.94 1)" font-size="14" fill="#b4b4b4" stroke="#b4b4b4" stroke-width="0.35" text-anchor="end">-1.8dB</text>
<text transform="translate(1894 169) scale(0.94 1)" font-size="14" fill="#b4b4b4" stroke="#b4b4b4" stroke-width="0.35" text-anchor="end">-136°</text>
<text transform="translate(999.8 206) scale(0.94 1)" font-size="14" fill="#b4b4b4" stroke="#b4b4b4" stroke-width="0.35" text-anchor="end">-2.4dB</text>
<text transform="translate(1894 206) scale(0.94 1)" font-size="14" fill="#b4b4b4" stroke="#b4b4b4" stroke-width="0.35" text-anchor="end">-144°</text>
<text transform="translate(999.8 242) scale(0.94 1)" font-size="14" fill="#b4b4b4" stroke="#b4b4b4" stroke-width="0.35" text-anchor="end">-3.0dB</text>
<text transform="translate(1894 242) scale(0.94 1)" font-size="14" fill="#b4b4b4" stroke="#b4b4b4" stroke-width="0.35" text-anchor="end">-152°</text>
<text transform="translate(999.8 279) scale(0.94 1)" font-size="14" fill="#b4b4b4" stroke="#b4b4b4" stroke-width="0.35" text-anchor="end">-3.6dB</text>
<text transform="translate(1894 279) scale(0.94 1)" font-size="14" fill="#b4b4b4" stroke="#b4b4b4" stroke-width="0.35" text-anchor="end">-160°</text>
<text transform="translate(999.8 315) scale(0.94 1)" font-size="14" fill="#b4b4b4" stroke="#b4b4b4" stroke-width="0.35" text-anchor="end">-4.2dB</text>
<text transform="translate(1894 315) scale(0.94 1)" font-size="14" fill="#b4b4b4" stroke="#b4b4b4" stroke-width="0.35" text-anchor="end">-168°</text>
<text transform="translate(999.8 352) scale(0.94 1)" font-size="14" fill="#b4b4b4" stroke="#b4b4b4" stroke-width="0.35" text-anchor="end">-4.8dB</text>
<text transform="translate(1894 352) scale(0.94 1)" font-size="14" fill="#b4b4b4" stroke="#b4b4b4" stroke-width="0.35" text-anchor="end">-176°</text>
<text transform="translate(999.8 388) scale(0.94 1)" font-size="14" fill="#b4b4b4" stroke="#b4b4b4" stroke-width="0.35" text-anchor="end">-5.4dB</text>
<text transform="translate(1894 388) scale(0.94 1)" font-size="14" fill="#b4b4b4" stroke="#b4b4b4" stroke-width="0.35" text-anchor="end">-184°</text>
<text transform="translate(999.8 425) scale(0.94 1)" font-size="14" fill="#b4b4b4" stroke="#b4b4b4" stroke-width="0.35" text-anchor="end">-6.0dB</text>
<text transform="translate(1894 425) scale(0.94 1)" font-size="14" fill="#b4b4b4" stroke="#b4b4b4" stroke-width="0.35" text-anchor="end">-192°</text>
<text transform="translate(999.8 461) scale(0.94 1)" font-size="14" fill="#b4b4b4" stroke="#b4b4b4" stroke-width="0.35" text-anchor="end">-6.6dB</text>
<text transform="translate(1894 461) scale(0.94 1)" font-size="14" fill="#b4b4b4" stroke="#b4b4b4" stroke-width="0.35" text-anchor="end">-200°</text>
<line x1="1009" y1="514.5" x2="1853" y2="514.5" stroke="#808080" stroke-dasharray="3 3"/>
<line x1="1009" y1="551.5" x2="1853" y2="551.5" stroke="#808080" stroke-dasharray="3 3"/>
<line x1="1009" y1="587.5" x2="1853" y2="587.5" stroke="#808080" stroke-dasharray="3 3"/>
<line x1="1009" y1="624.5" x2="1853" y2="624.5" stroke="#808080" stroke-dasharray="3 3"/>
<line x1="1009" y1="661.5" x2="1853" y2="661.5" stroke="#808080" stroke-dasharray="3 3"/>
<line x1="1009" y1="698.5" x2="1853" y2="698.5" stroke="#808080" stroke-dasharray="3 3"/>
<line x1="1009" y1="735.5" x2="1853" y2="735.5" stroke="#808080" stroke-dasharray="3 3"/>
<line x1="1009" y1="772.5" x2="1853" y2="772.5" stroke="#808080" stroke-dasharray="3 3"/>
<line x1="1009" y1="808.5" x2="1853" y2="808.5" stroke="#808080" stroke-dasharray="3 3"/>
<line x1="1009" y1="845.5" x2="1853" y2="845.5" stroke="#808080" stroke-dasharray="3 3"/>
<line x1="1102.5" y1="478" x2="1102.5" y2="882" stroke="#808080" stroke-dasharray="3 3"/>
<line x1="1157.5" y1="478" x2="1157.5" y2="882" stroke="#808080" stroke-dasharray="3 3"/>
<line x1="1196.5" y1="478" x2="1196.5" y2="882" stroke="#808080" stroke-dasharray="3 3"/>
<line x1="1227.5" y1="478" x2="1227.5" y2="882" stroke="#808080" stroke-dasharray="3 3"/>
<line x1="1252.5" y1="478" x2="1252.5" y2="882" stroke="#808080" stroke-dasharray="3 3"/>
<line x1="1273.5" y1="478" x2="1273.5" y2="882" stroke="#808080" stroke-dasharray="3 3"/>
<line x1="1291.5" y1="478" x2="1291.5" y2="882" stroke="#808080" stroke-dasharray="3 3"/>
<line x1="1307.5" y1="478" x2="1307.5" y2="882" stroke="#808080" stroke-dasharray="3 3"/>
<line x1="1321.5" y1="478" x2="1321.5" y2="882" stroke="#808080" stroke-dasharray="3 3"/>
<line x1="1415.5" y1="478" x2="1415.5" y2="882" stroke="#808080" stroke-dasharray="3 3"/>
<line x1="1470.5" y1="478" x2="1470.5" y2="882" stroke="#808080" stroke-dasharray="3 3"/>
<line x1="1510.5" y1="478" x2="1510.5" y2="882" stroke="#808080" stroke-dasharray="3 3"/>
<line x1="1540.5" y1="478" x2="1540.5" y2="882" stroke="#808080" stroke-dasharray="3 3"/>
<line x1="1565.5" y1="478" x2="1565.5" y2="882" stroke="#808080" stroke-dasharray="3 3"/>
<line x1="1586.5" y1="478" x2="1586.5" y2="882" stroke="#808080" stroke-dasharray="3 3"/>
<line x1="1604.5" y1="478" x2="1604.5" y2="882" stroke="#808080" stroke-dasharray="3 3"/>
<line x1="1620.5" y1="478" x2="1620.5" y2="882" stroke="#808080" stroke-dasharray="3 3"/>
<line x1="1634.5" y1="478" x2="1634.5" y2="882" stroke="#808080" stroke-dasharray="3 3"/>
<line x1="1728.5" y1="478" x2="1728.5" y2="882" stroke="#808080" stroke-dasharray="3 3"/>
<line x1="1784.5" y1="478" x2="1784.5" y2="882" stroke="#808080" stroke-dasharray="3 3"/>
<line x1="1823.5" y1="478" x2="1823.5" y2="882" stroke="#808080" stroke-dasharray="3 3"/>
<rect x="1001" y="477" width="860" height="1" fill="#b8b8b8"/>
<rect x="1001" y="882" width="860" height="1" fill="#b8b8b8"/>
<rect x="1008" y="477" width="1" height="406" fill="#b8b8b8"/>
<rect x="1853" y="477" width="1" height="406" fill="#b8b8b8"/>
<rect x="1001" y="514" width="8" height="1" fill="#b8b8b8"/>
<rect x="1853" y="514" width="8" height="1" fill="#b8b8b8"/>
<rect x="1001" y="551" width="8" height="1" fill="#b8b8b8"/>
<rect x="1853" y="551" width="8" height="1" fill="#b8b8b8"/>
<rect x="1001" y="587" width="8" height="1" fill="#b8b8b8"/>
<rect x="1853" y="587" width="8" height="1" fill="#b8b8b8"/>
<rect x="1001" y="624" width="8" height="1" fill="#b8b8b8"/>
<rect x="1853" y="624" width="8" height="1" fill="#b8b8b8"/>
<rect x="1001" y="661" width="8" height="1" fill="#b8b8b8"/>
<rect x="1853" y="661" width="8" height="1" fill="#b8b8b8"/>
<rect x="1001" y="698" width="8" height="1" fill="#b8b8b8"/>
<rect x="1853" y="698" width="8" height="1" fill="#b8b8b8"/>
<rect x="1001" y="735" width="8" height="1" fill="#b8b8b8"/>
<rect x="1853" y="735" width="8" height="1" fill="#b8b8b8"/>
<rect x="1001" y="772" width="8" height="1" fill="#b8b8b8"/>
<rect x="1853" y="772" width="8" height="1" fill="#b8b8b8"/>
<rect x="1001" y="808" width="8" height="1" fill="#b8b8b8"/>
<rect x="1853" y="808" width="8" height="1" fill="#b8b8b8"/>
<rect x="1001" y="845" width="8" height="1" fill="#b8b8b8"/>
<rect x="1853" y="845" width="8" height="1" fill="#b8b8b8"/>
<text transform="translate(999.8 482) scale(0.94 1)" font-size="14" fill="#b4b4b4" stroke="#b4b4b4" stroke-width="0.35" text-anchor="end">0dB</text>
<text transform="translate(1890.5 482) scale(0.94 1)" font-size="14" fill="#b4b4b4" stroke="#b4b4b4" stroke-width="0.35" text-anchor="end">160°</text>
<text transform="translate(999.8 519) scale(0.94 1)" font-size="14" fill="#b4b4b4" stroke="#b4b4b4" stroke-width="0.35" text-anchor="end">-2dB</text>
<text transform="translate(1890.5 519) scale(0.94 1)" font-size="14" fill="#b4b4b4" stroke="#b4b4b4" stroke-width="0.35" text-anchor="end">150°</text>
<text transform="translate(999.8 556) scale(0.94 1)" font-size="14" fill="#b4b4b4" stroke="#b4b4b4" stroke-width="0.35" text-anchor="end">-4dB</text>
<text transform="translate(1890.5 556) scale(0.94 1)" font-size="14" fill="#b4b4b4" stroke="#b4b4b4" stroke-width="0.35" text-anchor="end">140°</text>
<text transform="translate(999.8 592) scale(0.94 1)" font-size="14" fill="#b4b4b4" stroke="#b4b4b4" stroke-width="0.35" text-anchor="end">-6dB</text>
<text transform="translate(1890.5 592) scale(0.94 1)" font-size="14" fill="#b4b4b4" stroke="#b4b4b4" stroke-width="0.35" text-anchor="end">130°</text>
<text transform="translate(999.8 629) scale(0.94 1)" font-size="14" fill="#b4b4b4" stroke="#b4b4b4" stroke-width="0.35" text-anchor="end">-8dB</text>
<text transform="translate(1890.5 629) scale(0.94 1)" font-size="14" fill="#b4b4b4" stroke="#b4b4b4" stroke-width="0.35" text-anchor="end">120°</text>
<text transform="translate(999.8 666) scale(0.94 1)" font-size="14" fill="#b4b4b4" stroke="#b4b4b4" stroke-width="0.35" text-anchor="end">-10dB</text>
<text transform="translate(1890.5 666) scale(0.94 1)" font-size="14" fill="#b4b4b4" stroke="#b4b4b4" stroke-width="0.35" text-anchor="end">110°</text>
<text transform="translate(999.8 703) scale(0.94 1)" font-size="14" fill="#b4b4b4" stroke="#b4b4b4" stroke-width="0.35" text-anchor="end">-12dB</text>
<text transform="translate(1890.5 703) scale(0.94 1)" font-size="14" fill="#b4b4b4" stroke="#b4b4b4" stroke-width="0.35" text-anchor="end">100°</text>
<text transform="translate(999.8 740) scale(0.94 1)" font-size="14" fill="#b4b4b4" stroke="#b4b4b4" stroke-width="0.35" text-anchor="end">-14dB</text>
<text transform="translate(1890.5 740) scale(0.94 1)" font-size="14" fill="#b4b4b4" stroke="#b4b4b4" stroke-width="0.35" text-anchor="end">90°</text>
<text transform="translate(999.8 777) scale(0.94 1)" font-size="14" fill="#b4b4b4" stroke="#b4b4b4" stroke-width="0.35" text-anchor="end">-16dB</text>
<text transform="translate(1890.5 777) scale(0.94 1)" font-size="14" fill="#b4b4b4" stroke="#b4b4b4" stroke-width="0.35" text-anchor="end">80°</text>
<text transform="translate(999.8 813) scale(0.94 1)" font-size="14" fill="#b4b4b4" stroke="#b4b4b4" stroke-width="0.35" text-anchor="end">-18dB</text>
<text transform="translate(1890.5 813) scale(0.94 1)" font-size="14" fill="#b4b4b4" stroke="#b4b4b4" stroke-width="0.35" text-anchor="end">70°</text>
<text transform="translate(999.8 850) scale(0.94 1)" font-size="14" fill="#b4b4b4" stroke="#b4b4b4" stroke-width="0.35" text-anchor="end">-20dB</text>
<text transform="translate(1890.5 850) scale(0.94 1)" font-size="14" fill="#b4b4b4" stroke="#b4b4b4" stroke-width="0.35" text-anchor="end">60°</text>
<text transform="translate(999.8 887) scale(0.94 1)" font-size="14" fill="#b4b4b4" stroke="#b4b4b4" stroke-width="0.35" text-anchor="end">-22dB</text>
<text transform="translate(1890.5 887) scale(0.94 1)" font-size="14" fill="#b4b4b4" stroke="#b4b4b4" stroke-width="0.35" text-anchor="end">50°</text>
<rect x="1102" y="882" width="1" height="4" fill="#b8b8b8"/>
<rect x="1157" y="882" width="1" height="4" fill="#b8b8b8"/>
<rect x="1196" y="882" width="1" height="4" fill="#b8b8b8"/>
<rect x="1227" y="882" width="1" height="4" fill="#b8b8b8"/>
<rect x="1252" y="882" width="1" height="4" fill="#b8b8b8"/>
<rect x="1273" y="882" width="1" height="4" fill="#b8b8b8"/>
<rect x="1291" y="882" width="1" height="4" fill="#b8b8b8"/>
<rect x="1307" y="882" width="1" height="4" fill="#b8b8b8"/>
<rect x="1321" y="882" width="1" height="4" fill="#b8b8b8"/>
<rect x="1415" y="882" width="1" height="4" fill="#b8b8b8"/>
<rect x="1470" y="882" width="1" height="4" fill="#b8b8b8"/>
<rect x="1510" y="882" width="1" height="4" fill="#b8b8b8"/>
<rect x="1540" y="882" width="1" height="4" fill="#b8b8b8"/>
<rect x="1565" y="882" width="1" height="4" fill="#b8b8b8"/>
<rect x="1586" y="882" width="1" height="4" fill="#b8b8b8"/>
<rect x="1604" y="882" width="1" height="4" fill="#b8b8b8"/>
<rect x="1620" y="882" width="1" height="4" fill="#b8b8b8"/>
<rect x="1634" y="882" width="1" height="4" fill="#b8b8b8"/>
<rect x="1728" y="882" width="1" height="4" fill="#b8b8b8"/>
<rect x="1784" y="882" width="1" height="4" fill="#b8b8b8"/>
<rect x="1823" y="882" width="1" height="4" fill="#b8b8b8"/>
<rect x="1853" y="882" width="1" height="4" fill="#b8b8b8"/>
<rect x="1853" y="882" width="1" height="4" fill="#b8b8b8"/>
<rect x="1008" y="882" width="1" height="8" fill="#b8b8b8"/>
<rect x="1321" y="882" width="1" height="8" fill="#b8b8b8"/>
<rect x="1634" y="882" width="1" height="8" fill="#b8b8b8"/>
<text transform="translate(1007.5 902.7) scale(0.94 1)" font-size="14" fill="#b4b4b4" stroke="#b4b4b4" stroke-width="0.35" text-anchor="middle">100KHz</text>
<text transform="translate(1321 902.7) scale(0.94 1)" font-size="14" fill="#b4b4b4" stroke="#b4b4b4" stroke-width="0.35" text-anchor="middle">1MHz</text>
<text transform="translate(1633.5 902.7) scale(0.94 1)" font-size="14" fill="#b4b4b4" stroke="#b4b4b4" stroke-width="0.35" text-anchor="middle">10MHz</text>
<text x="1429.5" y="50" font-size="14" font-weight="bold" fill="#0a8cff" text-anchor="middle" textLength="43" lengthAdjust="spacingAndGlyphs">S21(v1)</text>
<text x="1429.5" y="472" font-size="14" font-weight="bold" fill="#00ff00" text-anchor="middle" textLength="43" lengthAdjust="spacingAndGlyphs">S22(v1)</text>
<svg x="1008" y="55" width="846" height="402" viewBox="1008 55 846 402" overflow="hidden">
<polyline points="1008.00,435.95 1009.41,431.79 1010.82,427.66 1012.23,423.54 1013.63,419.45 1015.04,415.38 1016.45,411.33 1017.86,407.30 1019.27,403.30 1020.67,399.31 1022.08,395.35 1023.49,391.41 1024.90,387.50 1026.31,383.61 1027.72,379.74 1029.12,375.89 1030.53,372.07 1031.94,368.27 1033.35,364.50 1034.76,360.75 1036.17,357.02 1037.58,353.32 1038.98,349.65 1040.39,346.00 1041.80,342.37 1043.21,338.77 1044.62,335.20 1046.03,331.65 1047.43,328.13 1048.84,324.63 1050.25,321.16 1051.66,317.72 1053.07,314.30 1054.47,310.91 1055.88,307.54 1057.29,304.21 1058.70,300.90 1060.11,297.61 1061.52,294.36 1062.92,291.13 1064.33,287.93 1065.74,284.75 1067.15,281.61 1068.56,278.49 1069.97,275.40 1071.38,272.33 1072.78,269.30 1074.19,266.29 1075.60,263.31 1077.01,260.36 1078.42,257.44 1079.83,254.54 1081.23,251.68 1082.64,248.84 1084.05,246.03 1085.46,243.25 1086.87,240.50 1088.28,237.77 1089.68,235.07 1091.09,232.41 1092.50,229.77 1093.91,227.15 1095.32,224.57 1096.72,222.01 1098.13,219.49 1099.54,216.99 1100.95,214.52 1102.36,212.08 1103.77,209.66 1105.17,207.27 1106.58,204.91 1107.99,202.58 1109.40,200.28 1110.81,198.00 1112.22,195.75 1113.62,193.53 1115.03,191.34 1116.44,189.17 1117.85,187.03 1119.26,184.92 1120.67,182.83 1122.08,180.77 1123.48,178.74 1124.89,176.73 1126.30,174.75 1127.71,172.80 1129.12,170.87 1130.53,168.97 1131.93,167.09 1133.34,165.24 1134.75,163.41 1136.16,161.61 1137.57,159.83 1138.97,158.08 1140.38,156.36 1141.79,154.65 1143.20,152.97 1144.61,151.32 1146.02,149.69 1147.42,148.08 1148.83,146.50 1150.24,144.94 1151.65,143.40 1153.06,141.89 1154.47,140.39 1155.88,138.92 1157.28,137.48 1158.69,136.05 1160.10,134.65 1161.51,133.26 1162.92,131.90 1164.33,130.56 1165.73,129.24 1167.14,127.95 1168.55,126.67 1169.96,125.41 1171.37,124.17 1172.78,122.95 1174.18,121.75 1175.59,120.57 1177.00,119.41 1178.41,118.27 1179.82,117.15 1181.22,116.04 1182.63,114.96 1184.04,113.89 1185.45,112.84 1186.86,111.81 1188.27,110.79 1189.67,109.79 1191.08,108.81 1192.49,107.84 1193.90,106.89 1195.31,105.96 1196.72,105.04 1198.12,104.14 1199.53,103.25 1200.94,102.38 1202.35,101.53 1203.76,100.69 1205.17,99.86 1206.58,99.05 1207.98,98.25 1209.39,97.47 1210.80,96.70 1212.21,95.94 1213.62,95.20 1215.03,94.47 1216.43,93.75 1217.84,93.05 1219.25,92.36 1220.66,91.68 1222.07,91.01 1223.47,90.36 1224.88,89.71 1226.29,89.08 1227.70,88.46 1229.11,87.85 1230.52,87.26 1231.92,86.67 1233.33,86.09 1234.74,85.53 1236.15,84.98 1237.56,84.43 1238.97,83.90 1240.38,83.37 1241.78,82.86 1243.19,82.35 1244.60,81.86 1246.01,81.37 1247.42,80.89 1248.83,80.43 1250.23,79.97 1251.64,79.52 1253.05,79.07 1254.46,78.64 1255.87,78.21 1257.28,77.80 1258.68,77.39 1260.09,76.98 1261.50,76.59 1262.91,76.20 1264.32,75.82 1265.72,75.45 1267.13,75.09 1268.54,74.73 1269.95,74.38 1271.36,74.03 1272.77,73.69 1274.17,73.36 1275.58,73.04 1276.99,72.72 1278.40,72.41 1279.81,72.10 1281.22,71.80 1282.62,71.50 1284.03,71.22 1285.44,70.93 1286.85,70.65 1288.26,70.38 1289.67,70.12 1291.08,69.85 1292.48,69.60 1293.89,69.35 1295.30,69.10 1296.71,68.86 1298.12,68.62 1299.53,68.39 1300.93,68.16 1302.34,67.94 1303.75,67.72 1305.16,67.50 1306.57,67.29 1307.97,67.08 1309.38,66.88 1310.79,66.68 1312.20,66.49 1313.61,66.30 1315.02,66.11 1316.42,65.93 1317.83,65.75 1319.24,65.57 1320.65,65.40 1322.06,65.23 1323.47,65.07 1324.88,64.91 1326.28,64.75 1327.69,64.59 1329.10,64.44 1330.51,64.29 1331.92,64.14 1333.33,64.00 1334.73,63.86 1336.14,63.72 1337.55,63.58 1338.96,63.45 1340.37,63.32 1341.78,63.19 1343.18,63.07 1344.59,62.95 1346.00,62.83 1347.41,62.71 1348.82,62.60 1350.23,62.48 1351.63,62.37 1353.04,62.26 1354.45,62.16 1355.86,62.06 1357.27,61.95 1358.67,61.85 1360.08,61.76 1361.49,61.66 1362.90,61.57 1364.31,61.48 1365.72,61.39 1367.12,61.30 1368.53,61.21 1369.94,61.13 1371.35,61.04 1372.76,60.96 1374.17,60.88 1375.58,60.81 1376.98,60.73 1378.39,60.65 1379.80,60.58 1381.21,60.51 1382.62,60.44 1384.03,60.37 1385.43,60.30 1386.84,60.24 1388.25,60.17 1389.66,60.11 1391.07,60.05 1392.47,59.99 1393.88,59.93 1395.29,59.87 1396.70,59.81 1398.11,59.76 1399.52,59.70 1400.92,59.65 1402.33,59.60 1403.74,59.54 1405.15,59.49 1406.56,59.44 1407.97,59.40 1409.38,59.35 1410.78,59.30 1412.19,59.26 1413.60,59.21 1415.01,59.17 1416.42,59.13 1417.83,59.09 1419.23,59.05 1420.64,59.01 1422.05,58.97 1423.46,58.93 1424.87,58.89 1426.28,58.86 1427.68,58.82 1429.09,58.78 1430.50,58.75 1431.91,58.72 1433.32,58.68 1434.73,58.65 1436.13,58.62 1437.54,58.59 1438.95,58.56 1440.36,58.53 1441.77,58.50 1443.17,58.47 1444.58,58.45 1445.99,58.42 1447.40,58.39 1448.81,58.37 1450.22,58.34 1451.62,58.32 1453.03,58.29 1454.44,58.27 1455.85,58.25 1457.26,58.22 1458.67,58.20 1460.08,58.18 1461.48,58.16 1462.89,58.14 1464.30,58.12 1465.71,58.10 1467.12,58.08 1468.53,58.06 1469.93,58.05 1471.34,58.03 1472.75,58.01 1474.16,57.99 1475.57,57.98 1476.98,57.96 1478.38,57.95 1479.79,57.93 1481.20,57.92 1482.61,57.90 1484.02,57.89 1485.42,57.87 1486.83,57.86 1488.24,57.85 1489.65,57.84 1491.06,57.82 1492.47,57.81 1493.88,57.80 1495.28,57.79 1496.69,57.78 1498.10,57.77 1499.51,57.76 1500.92,57.75 1502.33,57.74 1503.73,57.73 1505.14,57.72 1506.55,57.71 1507.96,57.70 1509.37,57.69 1510.78,57.69 1512.18,57.68 1513.59,57.67 1515.00,57.66 1516.41,57.66 1517.82,57.65 1519.22,57.65 1520.63,57.64 1522.04,57.63 1523.45,57.63 1524.86,57.62 1526.27,57.62 1527.68,57.61 1529.08,57.61 1530.49,57.61 1531.90,57.60 1533.31,57.60 1534.72,57.60 1536.12,57.59 1537.53,57.59 1538.94,57.59 1540.35,57.58 1541.76,57.58 1543.17,57.58 1544.57,57.58 1545.98,57.58 1547.39,57.58 1548.80,57.58 1550.21,57.57 1551.62,57.57 1553.03,57.57 1554.43,57.57 1555.84,57.57 1557.25,57.58 1558.66,57.58 1560.07,57.58 1561.47,57.58 1562.88,57.58 1564.29,57.58 1565.70,57.58 1567.11,57.59 1568.52,57.59 1569.93,57.59 1571.33,57.59 1572.74,57.60 1574.15,57.60 1575.56,57.60 1576.97,57.61 1578.38,57.61 1579.78,57.62 1581.19,57.62 1582.60,57.63 1584.01,57.63 1585.42,57.64 1586.83,57.64 1588.23,57.65 1589.64,57.66 1591.05,57.66 1592.46,57.67 1593.87,57.68 1595.28,57.68 1596.68,57.69 1598.09,57.70 1599.50,57.71 1600.91,57.72 1602.32,57.72 1603.72,57.73 1605.13,57.74 1606.54,57.75 1607.95,57.76 1609.36,57.77 1610.77,57.78 1612.17,57.80 1613.58,57.81 1614.99,57.82 1616.40,57.83 1617.81,57.84 1619.22,57.86 1620.62,57.87 1622.03,57.88 1623.44,57.90 1624.85,57.91 1626.26,57.93 1627.67,57.94 1629.07,57.96 1630.48,57.97 1631.89,57.99 1633.30,58.00 1634.71,58.02 1636.12,58.04 1637.53,58.06 1638.93,58.08 1640.34,58.09 1641.75,58.11 1643.16,58.13 1644.57,58.15 1645.97,58.17 1647.38,58.20 1648.79,58.22 1650.20,58.24 1651.61,58.26 1653.02,58.29 1654.43,58.31 1655.83,58.33 1657.24,58.36 1658.65,58.38 1660.06,58.41 1661.47,58.44 1662.88,58.46 1664.28,58.49 1665.69,58.52 1667.10,58.55 1668.51,58.58 1669.92,58.61 1671.32,58.64 1672.73,58.67 1674.14,58.70 1675.55,58.74 1676.96,58.77 1678.37,58.81 1679.78,58.84 1681.18,58.88 1682.59,58.92 1684.00,58.95 1685.41,58.99 1686.82,59.03 1688.22,59.07 1689.63,59.11 1691.04,59.15 1692.45,59.20 1693.86,59.24 1695.27,59.29 1696.68,59.33 1698.08,59.38 1699.49,59.43 1700.90,59.48 1702.31,59.53 1703.72,59.58 1705.12,59.63 1706.53,59.68 1707.94,59.74 1709.35,59.79 1710.76,59.85 1712.17,59.91 1713.57,59.97 1714.98,60.03 1716.39,60.09 1717.80,60.15 1719.21,60.21 1720.62,60.28 1722.03,60.35 1723.43,60.41 1724.84,60.48 1726.25,60.56 1727.66,60.63 1729.07,60.70 1730.47,60.78 1731.88,60.85 1733.29,60.93 1734.70,61.01 1736.11,61.10 1737.52,61.18 1738.93,61.27 1740.33,61.35 1741.74,61.44 1743.15,61.53 1744.56,61.63 1745.97,61.72 1747.38,61.82 1748.78,61.92 1750.19,62.02 1751.60,62.12 1753.01,62.23 1754.42,62.33 1755.83,62.44 1757.23,62.55 1758.64,62.67 1760.05,62.79 1761.46,62.90 1762.87,63.03 1764.28,63.15 1765.68,63.28 1767.09,63.40 1768.50,63.54 1769.91,63.67 1771.32,63.81 1772.72,63.95 1774.13,64.09 1775.54,64.24 1776.95,64.38 1778.36,64.54 1779.77,64.69 1781.18,64.85 1782.58,65.01 1783.99,65.17 1785.40,65.34 1786.81,65.51 1788.22,65.69 1789.62,65.86 1791.03,66.05 1792.44,66.23 1793.85,66.42 1795.26,66.61 1796.67,66.81 1798.08,67.01 1799.48,67.22 1800.89,67.42 1802.30,67.64 1803.71,67.86 1805.12,68.08 1806.53,68.30 1807.93,68.53 1809.34,68.77 1810.75,69.01 1812.16,69.26 1813.57,69.50 1814.97,69.76 1816.38,70.02 1817.79,70.28 1819.20,70.56 1820.61,70.83 1822.02,71.11 1823.43,71.40 1824.83,71.69 1826.24,71.99 1827.65,72.29 1829.06,72.60 1830.47,72.92 1831.88,73.24 1833.28,73.57 1834.69,73.91 1836.10,74.25 1837.51,74.60 1838.92,74.95 1840.32,75.32 1841.73,75.69 1843.14,76.06 1844.55,76.45 1845.96,76.84 1847.37,77.24 1848.78,77.65 1850.18,78.06 1851.59,78.48 1853.00,78.91" fill="none" stroke="#0a8cff" stroke-width="1" shape-rendering="crispEdges"/>
<polyline points="1008.00,88.44 1009.41,89.59 1010.82,90.75 1012.23,91.92 1013.63,93.10 1015.04,94.28 1016.45,95.47 1017.86,96.66 1019.27,97.86 1020.67,99.06 1022.08,100.27 1023.49,101.49 1024.90,102.71 1026.31,103.93 1027.72,105.17 1029.12,106.40 1030.53,107.65 1031.94,108.89 1033.35,110.14 1034.76,111.40 1036.17,112.66 1037.58,113.93 1038.98,115.20 1040.39,116.48 1041.80,117.76 1043.21,119.04 1044.62,120.33 1046.03,121.63 1047.43,122.92 1048.84,124.22 1050.25,125.53 1051.66,126.83 1053.07,128.15 1054.47,129.46 1055.88,130.78 1057.29,132.10 1058.70,133.42 1060.11,134.75 1061.52,136.08 1062.92,137.41 1064.33,138.75 1065.74,140.09 1067.15,141.42 1068.56,142.77 1069.97,144.11 1071.38,145.45 1072.78,146.80 1074.19,148.15 1075.60,149.50 1077.01,150.85 1078.42,152.20 1079.83,153.55 1081.23,154.91 1082.64,156.26 1084.05,157.62 1085.46,158.97 1086.87,160.33 1088.28,161.68 1089.68,163.04 1091.09,164.39 1092.50,165.75 1093.91,167.10 1095.32,168.45 1096.72,169.81 1098.13,171.16 1099.54,172.51 1100.95,173.86 1102.36,175.21 1103.77,176.55 1105.17,177.90 1106.58,179.24 1107.99,180.58 1109.40,181.92 1110.81,183.26 1112.22,184.59 1113.62,185.92 1115.03,187.25 1116.44,188.58 1117.85,189.90 1119.26,191.23 1120.67,192.54 1122.08,193.86 1123.48,195.17 1124.89,196.48 1126.30,197.78 1127.71,199.08 1129.12,200.38 1130.53,201.67 1131.93,202.96 1133.34,204.24 1134.75,205.52 1136.16,206.80 1137.57,208.07 1138.97,209.34 1140.38,210.60 1141.79,211.85 1143.20,213.11 1144.61,214.35 1146.02,215.60 1147.42,216.83 1148.83,218.07 1150.24,219.29 1151.65,220.51 1153.06,221.73 1154.47,222.94 1155.88,224.14 1157.28,225.34 1158.69,226.53 1160.10,227.72 1161.51,228.90 1162.92,230.08 1164.33,231.24 1165.73,232.41 1167.14,233.56 1168.55,234.71 1169.96,235.86 1171.37,237.00 1172.78,238.13 1174.18,239.25 1175.59,240.37 1177.00,241.48 1178.41,242.59 1179.82,243.69 1181.22,244.78 1182.63,245.87 1184.04,246.94 1185.45,248.02 1186.86,249.08 1188.27,250.14 1189.67,251.19 1191.08,252.24 1192.49,253.28 1193.90,254.31 1195.31,255.33 1196.72,256.35 1198.12,257.36 1199.53,258.36 1200.94,259.36 1202.35,260.35 1203.76,261.33 1205.17,262.31 1206.58,263.28 1207.98,264.24 1209.39,265.20 1210.80,266.15 1212.21,267.09 1213.62,268.02 1215.03,268.95 1216.43,269.87 1217.84,270.79 1219.25,271.69 1220.66,272.59 1222.07,273.49 1223.47,274.37 1224.88,275.25 1226.29,276.13 1227.70,276.99 1229.11,277.85 1230.52,278.70 1231.92,279.55 1233.33,280.39 1234.74,281.22 1236.15,282.05 1237.56,282.87 1238.97,283.68 1240.38,284.49 1241.78,285.29 1243.19,286.08 1244.60,286.87 1246.01,287.65 1247.42,288.42 1248.83,289.19 1250.23,289.95 1251.64,290.70 1253.05,291.45 1254.46,292.19 1255.87,292.93 1257.28,293.66 1258.68,294.38 1260.09,295.10 1261.50,295.81 1262.91,296.51 1264.32,297.21 1265.72,297.91 1267.13,298.59 1268.54,299.27 1269.95,299.95 1271.36,300.62 1272.77,301.28 1274.17,301.94 1275.58,302.59 1276.99,303.24 1278.40,303.88 1279.81,304.51 1281.22,305.14 1282.62,305.77 1284.03,306.39 1285.44,307.00 1286.85,307.61 1288.26,308.21 1289.67,308.81 1291.08,309.40 1292.48,309.99 1293.89,310.57 1295.30,311.14 1296.71,311.71 1298.12,312.28 1299.53,312.84 1300.93,313.40 1302.34,313.95 1303.75,314.49 1305.16,315.03 1306.57,315.57 1307.97,316.10 1309.38,316.63 1310.79,317.15 1312.20,317.67 1313.61,318.18 1315.02,318.69 1316.42,319.19 1317.83,319.69 1319.24,320.19 1320.65,320.68 1322.06,321.16 1323.47,321.65 1324.88,322.12 1326.28,322.60 1327.69,323.06 1329.10,323.53 1330.51,323.99 1331.92,324.45 1333.33,324.90 1334.73,325.35 1336.14,325.79 1337.55,326.23 1338.96,326.67 1340.37,327.10 1341.78,327.53 1343.18,327.95 1344.59,328.37 1346.00,328.79 1347.41,329.21 1348.82,329.62 1350.23,330.02 1351.63,330.42 1353.04,330.82 1354.45,331.22 1355.86,331.61 1357.27,332.00 1358.67,332.39 1360.08,332.77 1361.49,333.15 1362.90,333.52 1364.31,333.90 1365.72,334.26 1367.12,334.63 1368.53,334.99 1369.94,335.35 1371.35,335.71 1372.76,336.06 1374.17,336.41 1375.58,336.76 1376.98,337.11 1378.39,337.45 1379.80,337.79 1381.21,338.12 1382.62,338.45 1384.03,338.79 1385.43,339.11 1386.84,339.44 1388.25,339.76 1389.66,340.08 1391.07,340.40 1392.47,340.71 1393.88,341.02 1395.29,341.33 1396.70,341.64 1398.11,341.94 1399.52,342.24 1400.92,342.54 1402.33,342.84 1403.74,343.14 1405.15,343.43 1406.56,343.72 1407.97,344.01 1409.38,344.29 1410.78,344.58 1412.19,344.86 1413.60,345.14 1415.01,345.41 1416.42,345.69 1417.83,345.96 1419.23,346.23 1420.64,346.50 1422.05,346.77 1423.46,347.03 1424.87,347.30 1426.28,347.56 1427.68,347.82 1429.09,348.07 1430.50,348.33 1431.91,348.58 1433.32,348.83 1434.73,349.08 1436.13,349.33 1437.54,349.58 1438.95,349.83 1440.36,350.07 1441.77,350.31 1443.17,350.55 1444.58,350.79 1445.99,351.03 1447.40,351.26 1448.81,351.50 1450.22,351.73 1451.62,351.96 1453.03,352.19 1454.44,352.42 1455.85,352.65 1457.26,352.87 1458.67,353.10 1460.08,353.32 1461.48,353.54 1462.89,353.76 1464.30,353.98 1465.71,354.20 1467.12,354.42 1468.53,354.64 1469.93,354.85 1471.34,355.06 1472.75,355.28 1474.16,355.49 1475.57,355.70 1476.98,355.91 1478.38,356.12 1479.79,356.32 1481.20,356.53 1482.61,356.74 1484.02,356.94 1485.42,357.15 1486.83,357.35 1488.24,357.55 1489.65,357.75 1491.06,357.95 1492.47,358.15 1493.88,358.35 1495.28,358.55 1496.69,358.75 1498.10,358.94 1499.51,359.14 1500.92,359.33 1502.33,359.53 1503.73,359.72 1505.14,359.92 1506.55,360.11 1507.96,360.30 1509.37,360.49 1510.78,360.69 1512.18,360.88 1513.59,361.07 1515.00,361.26 1516.41,361.45 1517.82,361.64 1519.22,361.82 1520.63,362.01 1522.04,362.20 1523.45,362.39 1524.86,362.58 1526.27,362.76 1527.68,362.95 1529.08,363.14 1530.49,363.32 1531.90,363.51 1533.31,363.69 1534.72,363.88 1536.12,364.07 1537.53,364.25 1538.94,364.44 1540.35,364.62 1541.76,364.81 1543.17,364.99 1544.57,365.18 1545.98,365.36 1547.39,365.55 1548.80,365.73 1550.21,365.92 1551.62,366.10 1553.03,366.29 1554.43,366.47 1555.84,366.66 1557.25,366.84 1558.66,367.03 1560.07,367.22 1561.47,367.40 1562.88,367.59 1564.29,367.77 1565.70,367.96 1567.11,368.15 1568.52,368.34 1569.93,368.52 1571.33,368.71 1572.74,368.90 1574.15,369.09 1575.56,369.28 1576.97,369.47 1578.38,369.66 1579.78,369.85 1581.19,370.04 1582.60,370.23 1584.01,370.42 1585.42,370.62 1586.83,370.81 1588.23,371.00 1589.64,371.20 1591.05,371.39 1592.46,371.59 1593.87,371.78 1595.28,371.98 1596.68,372.18 1598.09,372.38 1599.50,372.58 1600.91,372.78 1602.32,372.98 1603.72,373.18 1605.13,373.38 1606.54,373.58 1607.95,373.79 1609.36,373.99 1610.77,374.20 1612.17,374.41 1613.58,374.61 1614.99,374.82 1616.40,375.03 1617.81,375.24 1619.22,375.46 1620.62,375.67 1622.03,375.88 1623.44,376.10 1624.85,376.32 1626.26,376.53 1627.67,376.75 1629.07,376.97 1630.48,377.19 1631.89,377.42 1633.30,377.64 1634.71,377.87 1636.12,378.09 1637.53,378.32 1638.93,378.55 1640.34,378.78 1641.75,379.01 1643.16,379.25 1644.57,379.48 1645.97,379.72 1647.38,379.96 1648.79,380.20 1650.20,380.44 1651.61,380.68 1653.02,380.92 1654.43,381.17 1655.83,381.42 1657.24,381.67 1658.65,381.92 1660.06,382.17 1661.47,382.43 1662.88,382.69 1664.28,382.94 1665.69,383.20 1667.10,383.47 1668.51,383.73 1669.92,384.00 1671.32,384.27 1672.73,384.54 1674.14,384.81 1675.55,385.08 1676.96,385.36 1678.37,385.64 1679.78,385.92 1681.18,386.20 1682.59,386.49 1684.00,386.78 1685.41,387.07 1686.82,387.36 1688.22,387.65 1689.63,387.95 1691.04,388.25 1692.45,388.55 1693.86,388.86 1695.27,389.16 1696.68,389.47 1698.08,389.79 1699.49,390.10 1700.90,390.42 1702.31,390.74 1703.72,391.06 1705.12,391.39 1706.53,391.72 1707.94,392.05 1709.35,392.38 1710.76,392.72 1712.17,393.06 1713.57,393.40 1714.98,393.75 1716.39,394.10 1717.80,394.45 1719.21,394.80 1720.62,395.16 1722.03,395.52 1723.43,395.89 1724.84,396.26 1726.25,396.63 1727.66,397.00 1729.07,397.38 1730.47,397.76 1731.88,398.15 1733.29,398.53 1734.70,398.93 1736.11,399.32 1737.52,399.72 1738.93,400.12 1740.33,400.53 1741.74,400.94 1743.15,401.36 1744.56,401.77 1745.97,402.20 1747.38,402.62 1748.78,403.05 1750.19,403.49 1751.60,403.92 1753.01,404.37 1754.42,404.81 1755.83,405.26 1757.23,405.72 1758.64,406.18 1760.05,406.64 1761.46,407.11 1762.87,407.58 1764.28,408.06 1765.68,408.54 1767.09,409.03 1768.50,409.52 1769.91,410.01 1771.32,410.51 1772.72,411.02 1774.13,411.53 1775.54,412.05 1776.95,412.57 1778.36,413.09 1779.77,413.62 1781.18,414.16 1782.58,414.70 1783.99,415.24 1785.40,415.80 1786.81,416.35 1788.22,416.92 1789.62,417.48 1791.03,418.06 1792.44,418.64 1793.85,419.22 1795.26,419.81 1796.67,420.41 1798.08,421.01 1799.48,421.62 1800.89,422.23 1802.30,422.85 1803.71,423.48 1805.12,424.11 1806.53,424.75 1807.93,425.40 1809.34,426.05 1810.75,426.71 1812.16,427.37 1813.57,428.05 1814.97,428.72 1816.38,429.41 1817.79,430.10 1819.20,430.80 1820.61,431.51 1822.02,432.22 1823.43,432.94 1824.83,433.67 1826.24,434.40 1827.65,435.15 1829.06,435.90 1830.47,436.65 1831.88,437.42 1833.28,438.19 1834.69,438.97 1836.10,439.76 1837.51,440.56 1838.92,441.36 1840.32,442.17 1841.73,442.99 1843.14,443.82 1844.55,444.66 1845.96,445.51 1847.37,446.36 1848.78,447.23 1850.18,448.10 1851.59,448.98 1853.00,449.87" fill="none" stroke="#0a8cff" stroke-width="1" shape-rendering="crispEdges" stroke-dasharray="1.3 1.5"/>
</svg>
<svg x="1008" y="477" width="846" height="406" viewBox="1008 477 846 406" overflow="hidden">
<polyline points="1008.00,498.98 1009.50,499.20 1011.00,499.45 1012.50,499.72 1014.00,500.02 1015.50,500.35 1017.00,500.69 1018.50,501.06 1020.00,501.45 1021.50,501.87 1023.00,502.30 1024.50,502.76 1026.00,503.23 1027.50,503.73 1029.00,504.24 1030.50,504.77 1032.00,505.31 1033.50,505.88 1035.00,506.46 1036.50,507.05 1038.00,507.66 1039.50,508.28 1041.00,508.92 1042.50,509.56 1044.00,510.22 1045.50,510.89 1047.00,511.57 1048.50,512.26 1050.00,512.96 1051.50,513.67 1053.00,514.38 1054.50,515.11 1056.00,515.84 1057.50,516.57 1059.00,517.31 1060.50,518.05 1062.00,518.80 1063.50,519.55 1065.00,520.30 1066.50,521.06 1068.00,521.82 1069.50,522.57 1071.00,523.33 1072.50,524.09 1074.00,524.85 1075.50,525.62 1077.00,526.39 1078.50,527.16 1080.00,527.94 1081.50,528.72 1083.00,529.51 1084.50,530.30 1086.00,531.10 1087.50,531.91 1089.00,532.72 1090.50,533.54 1092.00,534.37 1093.50,535.21 1095.00,536.06 1096.50,536.92 1098.00,537.79 1099.50,538.67 1101.00,539.56 1102.50,540.46 1104.00,541.38 1105.50,542.31 1107.00,543.25 1108.50,544.21 1110.00,545.18 1111.50,546.16 1113.00,547.16 1114.50,548.18 1116.00,549.21 1117.50,550.26 1119.00,551.33 1120.50,552.41 1122.00,553.50 1123.50,554.62 1125.00,555.74 1126.50,556.88 1128.00,558.03 1129.50,559.20 1131.00,560.37 1132.50,561.56 1134.00,562.76 1135.50,563.97 1137.00,565.20 1138.50,566.43 1140.00,567.67 1141.50,568.92 1143.00,570.18 1144.50,571.44 1146.00,572.72 1147.50,574.00 1149.00,575.29 1150.50,576.58 1152.00,577.88 1153.50,579.19 1155.00,580.50 1156.50,581.81 1158.00,583.13 1159.50,584.45 1161.00,585.77 1162.50,587.10 1164.00,588.43 1165.50,589.77 1167.00,591.11 1168.50,592.45 1170.00,593.79 1171.50,595.14 1173.00,596.50 1174.50,597.85 1176.00,599.21 1177.50,600.58 1179.00,601.95 1180.50,603.32 1182.00,604.69 1183.50,606.07 1185.00,607.45 1186.50,608.84 1188.00,610.23 1189.50,611.62 1191.00,613.02 1192.50,614.42 1194.00,615.82 1195.50,617.23 1197.00,618.64 1198.50,620.05 1200.00,621.47 1201.50,622.90 1203.00,624.32 1204.50,625.75 1206.00,627.19 1207.50,628.62 1209.00,630.07 1210.50,631.51 1212.00,632.96 1213.50,634.41 1215.00,635.87 1216.50,637.33 1218.00,638.79 1219.50,640.26 1221.00,641.73 1222.50,643.21 1224.00,644.69 1225.50,646.17 1227.00,647.66 1228.50,649.15 1230.00,650.64 1231.50,652.14 1233.00,653.64 1234.50,655.14 1236.00,656.64 1237.50,658.15 1239.00,659.66 1240.50,661.17 1242.00,662.69 1243.50,664.20 1245.00,665.72 1246.50,667.24 1248.00,668.76 1249.50,670.29 1251.00,671.81 1252.50,673.34 1254.00,674.87 1255.50,676.40 1257.00,677.93 1258.50,679.47 1260.00,681.00 1261.50,682.53 1263.00,684.07 1264.50,685.60 1266.00,687.14 1267.50,688.68 1269.00,690.21 1270.50,691.75 1272.00,693.29 1273.50,694.82 1275.00,696.36 1276.50,697.90 1278.00,699.43 1279.50,700.97 1281.00,702.50 1282.50,704.04 1284.00,705.57 1285.50,707.10 1287.00,708.63 1288.50,710.16 1290.00,711.69 1291.50,713.22 1293.00,714.74 1294.50,716.27 1296.00,717.79 1297.50,719.31 1299.00,720.83 1300.50,722.35 1302.00,723.86 1303.50,725.37 1305.00,726.88 1306.50,728.39 1308.00,729.89 1309.50,731.39 1311.00,732.89 1312.50,734.39 1314.00,735.88 1315.50,737.37 1317.00,738.86 1318.50,740.34 1320.00,741.82 1321.50,743.29 1323.00,744.76 1324.50,746.23 1326.00,747.69 1327.50,749.15 1329.00,750.61 1330.50,752.06 1332.00,753.51 1333.50,754.95 1335.00,756.38 1336.50,757.82 1338.00,759.24 1339.50,760.67 1341.00,762.08 1342.50,763.49 1344.00,764.90 1345.50,766.30 1347.00,767.70 1348.50,769.09 1350.00,770.47 1351.50,771.85 1353.00,773.22 1354.50,774.59 1356.00,775.95 1357.50,777.30 1359.00,778.65 1360.50,779.99 1362.00,781.32 1363.50,782.65 1365.00,783.97 1366.50,785.28 1368.00,786.59 1369.50,787.89 1371.00,789.18 1372.50,790.47 1374.00,791.75 1375.50,793.02 1377.00,794.29 1378.50,795.54 1380.00,796.79 1381.50,798.04 1383.00,799.27 1384.50,800.50 1386.00,801.72 1387.50,802.93 1389.00,804.13 1390.50,805.33 1392.00,806.51 1393.50,807.69 1395.00,808.86 1396.50,810.02 1398.00,811.18 1399.50,812.32 1401.00,813.46 1402.50,814.59 1404.00,815.71 1405.50,816.82 1407.00,817.92 1408.50,819.01 1410.00,820.09 1411.50,821.17 1413.00,822.23 1414.50,823.29 1416.00,824.33 1417.50,825.37 1419.00,826.40 1420.50,827.42 1422.00,828.42 1423.50,829.42 1425.00,830.41 1426.50,831.39 1428.00,832.36 1429.50,833.31 1431.00,834.26 1432.50,835.20 1434.00,836.13 1435.50,837.05 1437.00,837.96 1438.50,838.86 1440.00,839.74 1441.50,840.62 1443.00,841.49 1444.50,842.34 1446.00,843.19 1447.50,844.02 1449.00,844.85 1450.50,845.66 1452.00,846.46 1453.50,847.25 1455.00,848.02 1456.50,848.79 1458.00,849.55 1459.50,850.29 1461.00,851.02 1462.50,851.74 1464.00,852.45 1465.50,853.15 1467.00,853.84 1468.50,854.51 1470.00,855.18 1471.50,855.83 1473.00,856.47 1474.50,857.10 1476.00,857.72 1477.50,858.32 1479.00,858.92 1480.50,859.50 1482.00,860.07 1483.50,860.63 1485.00,861.18 1486.50,861.72 1488.00,862.24 1489.50,862.76 1491.00,863.26 1492.50,863.75 1494.00,864.23 1495.50,864.70 1497.00,865.15 1498.50,865.60 1500.00,866.03 1501.50,866.45 1503.00,866.86 1504.50,867.26 1506.00,867.64 1507.50,868.02 1509.00,868.38 1510.50,868.73 1512.00,869.07 1513.50,869.40 1515.00,869.71 1516.50,870.01 1518.00,870.30 1519.50,870.58 1521.00,870.85 1522.50,871.11 1524.00,871.35 1525.50,871.58 1527.00,871.80 1528.50,872.01 1530.00,872.21 1531.50,872.39 1533.00,872.56 1534.50,872.73 1536.00,872.87 1537.50,873.01 1539.00,873.13 1540.50,873.25 1542.00,873.35 1543.50,873.44 1545.00,873.51 1546.50,873.58 1548.00,873.63 1549.50,873.67 1551.00,873.70 1552.50,873.71 1554.00,873.72 1555.50,873.71 1557.00,873.69 1558.50,873.66 1560.00,873.61 1561.50,873.55 1563.00,873.48 1564.50,873.40 1566.00,873.31 1567.50,873.20 1569.00,873.09 1570.50,872.95 1572.00,872.81 1573.50,872.66 1575.00,872.49 1576.50,872.31 1578.00,872.12 1579.50,871.92 1581.00,871.70 1582.50,871.47 1584.00,871.23 1585.50,870.98 1587.00,870.72 1588.50,870.44 1590.00,870.15 1591.50,869.85 1593.00,869.54 1594.50,869.21 1596.00,868.88 1597.50,868.53 1599.00,868.17 1600.50,867.79 1602.00,867.41 1603.50,867.01 1605.00,866.60 1606.50,866.18 1608.00,865.75 1609.50,865.30 1611.00,864.84 1612.50,864.37 1614.00,863.89 1615.50,863.40 1617.00,862.89 1618.50,862.37 1620.00,861.85 1621.50,861.30 1623.00,860.75 1624.50,860.18 1626.00,859.61 1627.50,859.02 1629.00,858.41 1630.50,857.80 1632.00,857.18 1633.50,856.54 1635.00,855.89 1636.50,855.23 1638.00,854.55 1639.50,853.87 1641.00,853.17 1642.50,852.46 1644.00,851.74 1645.50,851.01 1647.00,850.26 1648.50,849.51 1650.00,848.74 1651.50,847.96 1653.00,847.17 1654.50,846.36 1656.00,845.55 1657.50,844.72 1659.00,843.88 1660.50,843.03 1662.00,842.17 1663.50,841.30 1665.00,840.42 1666.50,839.53 1668.00,838.62 1669.50,837.71 1671.00,836.78 1672.50,835.85 1674.00,834.90 1675.50,833.94 1677.00,832.98 1678.50,832.00 1680.00,831.01 1681.50,830.01 1683.00,829.01 1684.50,827.99 1686.00,826.97 1687.50,825.93 1689.00,824.89 1690.50,823.83 1692.00,822.77 1693.50,821.70 1695.00,820.61 1696.50,819.52 1698.00,818.42 1699.50,817.32 1701.00,816.20 1702.50,815.08 1704.00,813.94 1705.50,812.80 1707.00,811.65 1708.50,810.49 1710.00,809.33 1711.50,808.15 1713.00,806.97 1714.50,805.78 1716.00,804.58 1717.50,803.38 1719.00,802.17 1720.50,800.95 1722.00,799.72 1723.50,798.49 1725.00,797.25 1726.50,796.00 1728.00,794.75 1729.50,793.48 1731.00,792.22 1732.50,790.94 1734.00,789.66 1735.50,788.37 1737.00,787.08 1738.50,785.78 1740.00,784.48 1741.50,783.16 1743.00,781.85 1744.50,780.52 1746.00,779.19 1747.50,777.86 1749.00,776.52 1750.50,775.18 1752.00,773.82 1753.50,772.47 1755.00,771.11 1756.50,769.74 1758.00,768.37 1759.50,767.00 1761.00,765.62 1762.50,764.23 1764.00,762.84 1765.50,761.45 1767.00,760.05 1768.50,758.65 1770.00,757.25 1771.50,755.84 1773.00,754.42 1774.50,753.01 1776.00,751.58 1777.50,750.16 1779.00,748.73 1780.50,747.30 1782.00,745.86 1783.50,744.42 1785.00,742.98 1786.50,741.53 1788.00,740.08 1789.50,738.62 1791.00,737.17 1792.50,735.70 1794.00,734.24 1795.50,732.77 1797.00,731.30 1798.50,729.82 1800.00,728.35 1801.50,726.86 1803.00,725.38 1804.50,723.89 1806.00,722.40 1807.50,720.91 1809.00,719.41 1810.50,717.91 1812.00,716.41 1813.50,714.90 1815.00,713.39 1816.50,711.88 1818.00,710.37 1819.50,708.85 1821.00,707.33 1822.50,705.81 1824.00,704.28 1825.50,702.75 1827.00,701.22 1828.50,699.69 1830.00,698.15 1831.50,696.62 1833.00,695.08 1834.50,693.53 1836.00,691.99 1837.50,690.44 1839.00,688.89 1840.50,687.34 1842.00,685.78 1843.50,684.23 1845.00,682.67 1846.50,681.11 1848.00,679.54 1849.50,677.98 1851.00,676.41 1852.50,674.84 1854.00,673.27" fill="none" stroke="#00ff00" stroke-width="1" shape-rendering="crispEdges"/>
<polyline points="1008.00,516.69 1009.50,517.56 1011.00,518.46 1012.50,519.38 1014.00,520.32 1015.50,521.29 1017.00,522.27 1018.50,523.28 1020.00,524.31 1021.50,525.36 1023.00,526.42 1024.50,527.50 1026.00,528.60 1027.50,529.72 1029.00,530.85 1030.50,532.00 1032.00,533.16 1033.50,534.33 1035.00,535.52 1036.50,536.72 1038.00,537.92 1039.50,539.14 1041.00,540.37 1042.50,541.61 1044.00,542.85 1045.50,544.10 1047.00,545.36 1048.50,546.63 1050.00,547.89 1051.50,549.17 1053.00,550.44 1054.50,551.72 1056.00,553.00 1057.50,554.28 1059.00,555.57 1060.50,556.85 1062.00,558.13 1063.50,559.41 1065.00,560.68 1066.50,561.95 1068.00,563.22 1069.50,564.48 1071.00,565.74 1072.50,566.99 1074.00,568.23 1075.50,569.47 1077.00,570.69 1078.50,571.91 1080.00,573.12 1081.50,574.32 1083.00,575.51 1084.50,576.70 1086.00,577.88 1087.50,579.06 1089.00,580.23 1090.50,581.40 1092.00,582.56 1093.50,583.73 1095.00,584.89 1096.50,586.06 1098.00,587.22 1099.50,588.39 1101.00,589.55 1102.50,590.72 1104.00,591.90 1105.50,593.08 1107.00,594.26 1108.50,595.46 1110.00,596.65 1111.50,597.86 1113.00,599.07 1114.50,600.30 1116.00,601.53 1117.50,602.78 1119.00,604.03 1120.50,605.30 1122.00,606.58 1123.50,607.88 1125.00,609.19 1126.50,610.52 1128.00,611.86 1129.50,613.21 1131.00,614.58 1132.50,615.96 1134.00,617.34 1135.50,618.73 1137.00,620.13 1138.50,621.54 1140.00,622.94 1141.50,624.35 1143.00,625.76 1144.50,627.18 1146.00,628.58 1147.50,629.99 1149.00,631.39 1150.50,632.79 1152.00,634.18 1153.50,635.56 1155.00,636.93 1156.50,638.29 1158.00,639.64 1159.50,640.97 1161.00,642.29 1162.50,643.60 1164.00,644.90 1165.50,646.19 1167.00,647.46 1168.50,648.73 1170.00,649.98 1171.50,651.23 1173.00,652.46 1174.50,653.68 1176.00,654.90 1177.50,656.11 1179.00,657.30 1180.50,658.49 1182.00,659.68 1183.50,660.85 1185.00,662.02 1186.50,663.18 1188.00,664.33 1189.50,665.48 1191.00,666.62 1192.50,667.76 1194.00,668.89 1195.50,670.02 1197.00,671.15 1198.50,672.27 1200.00,673.38 1201.50,674.49 1203.00,675.60 1204.50,676.71 1206.00,677.82 1207.50,678.92 1209.00,680.02 1210.50,681.12 1212.00,682.22 1213.50,683.32 1215.00,684.42 1216.50,685.52 1218.00,686.62 1219.50,687.72 1221.00,688.82 1222.50,689.93 1224.00,691.03 1225.50,692.14 1227.00,693.24 1228.50,694.35 1230.00,695.46 1231.50,696.56 1233.00,697.67 1234.50,698.77 1236.00,699.87 1237.50,700.97 1239.00,702.07 1240.50,703.16 1242.00,704.25 1243.50,705.34 1245.00,706.42 1246.50,707.50 1248.00,708.57 1249.50,709.64 1251.00,710.70 1252.50,711.76 1254.00,712.81 1255.50,713.85 1257.00,714.89 1258.50,715.92 1260.00,716.94 1261.50,717.96 1263.00,718.98 1264.50,719.99 1266.00,720.99 1267.50,721.99 1269.00,722.98 1270.50,723.97 1272.00,724.96 1273.50,725.94 1275.00,726.91 1276.50,727.89 1278.00,728.85 1279.50,729.82 1281.00,730.78 1282.50,731.74 1284.00,732.69 1285.50,733.64 1287.00,734.59 1288.50,735.54 1290.00,736.48 1291.50,737.42 1293.00,738.36 1294.50,739.30 1296.00,740.24 1297.50,741.17 1299.00,742.10 1300.50,743.03 1302.00,743.96 1303.50,744.89 1305.00,745.82 1306.50,746.74 1308.00,747.67 1309.50,748.60 1311.00,749.52 1312.50,750.45 1314.00,751.37 1315.50,752.30 1317.00,753.23 1318.50,754.15 1320.00,755.08 1321.50,756.01 1323.00,756.94 1324.50,757.87 1326.00,758.80 1327.50,759.74 1329.00,760.67 1330.50,761.61 1332.00,762.55 1333.50,763.49 1335.00,764.44 1336.50,765.38 1338.00,766.33 1339.50,767.29 1341.00,768.24 1342.50,769.20 1344.00,770.16 1345.50,771.13 1347.00,772.10 1348.50,773.07 1350.00,774.05 1351.50,775.03 1353.00,776.02 1354.50,777.01 1356.00,778.00 1357.50,779.00 1359.00,780.01 1360.50,781.02 1362.00,782.03 1363.50,783.06 1365.00,784.08 1366.50,785.12 1368.00,786.15 1369.50,787.20 1371.00,788.25 1372.50,789.31 1374.00,790.37 1375.50,791.44 1377.00,792.52 1378.50,793.60 1380.00,794.69 1381.50,795.78 1383.00,796.87 1384.50,797.96 1386.00,799.06 1387.50,800.15 1389.00,801.25 1390.50,802.34 1392.00,803.44 1393.50,804.52 1395.00,805.61 1396.50,806.69 1398.00,807.77 1399.50,808.84 1401.00,809.90 1402.50,810.96 1404.00,812.01 1405.50,813.05 1407.00,814.08 1408.50,815.10 1410.00,816.11 1411.50,817.11 1413.00,818.09 1414.50,819.06 1416.00,820.02 1417.50,820.96 1419.00,821.89 1420.50,822.81 1422.00,823.71 1423.50,824.61 1425.00,825.51 1426.50,826.39 1428.00,827.28 1429.50,828.16 1431.00,829.03 1432.50,829.91 1434.00,830.79 1435.50,831.68 1437.00,832.56 1438.50,833.46 1440.00,834.36 1441.50,835.27 1443.00,836.18 1444.50,837.11 1446.00,838.03 1447.50,838.97 1449.00,839.90 1450.50,840.84 1452.00,841.78 1453.50,842.71 1455.00,843.65 1456.50,844.58 1458.00,845.51 1459.50,846.43 1461.00,847.34 1462.50,848.25 1464.00,849.15 1465.50,850.04 1467.00,850.92 1468.50,851.79 1470.00,852.64 1471.50,853.48 1473.00,854.30 1474.50,855.11 1476.00,855.90 1477.50,856.68 1479.00,857.45 1480.50,858.19 1482.00,858.93 1483.50,859.65 1485.00,860.36 1486.50,861.05 1488.00,861.73 1489.50,862.39 1491.00,863.04 1492.50,863.67 1494.00,864.29 1495.50,864.90 1497.00,865.50 1498.50,866.08 1500.00,866.64 1501.50,867.19 1503.00,867.73 1504.50,868.26 1506.00,868.77 1507.50,869.27 1509.00,869.76 1510.50,870.23 1512.00,870.69 1513.50,871.13 1515.00,871.57 1516.50,871.99 1518.00,872.40 1519.50,872.79 1521.00,873.18 1522.50,873.55 1524.00,873.90 1525.50,874.25 1527.00,874.58 1528.50,874.90 1530.00,875.21 1531.50,875.51 1533.00,875.79 1534.50,876.06 1536.00,876.32 1537.50,876.57 1539.00,876.81 1540.50,877.03 1542.00,877.25 1543.50,877.45 1545.00,877.64 1546.50,877.82 1548.00,877.98 1549.50,878.14 1551.00,878.29 1552.50,878.42 1554.00,878.54 1555.50,878.66 1557.00,878.76 1558.50,878.85 1560.00,878.93 1561.50,879.00 1563.00,879.05 1564.50,879.10 1566.00,879.14 1567.50,879.17 1569.00,879.18 1570.50,879.19 1572.00,879.19 1573.50,879.17 1575.00,879.15 1576.50,879.11 1578.00,879.07 1579.50,879.02 1581.00,878.95 1582.50,878.88 1584.00,878.80 1585.50,878.71 1587.00,878.61 1588.50,878.49 1590.00,878.37 1591.50,878.25 1593.00,878.11 1594.50,877.96 1596.00,877.80 1597.50,877.64 1599.00,877.46 1600.50,877.28 1602.00,877.09 1603.50,876.89 1605.00,876.68 1606.50,876.46 1608.00,876.24 1609.50,876.00 1611.00,875.76 1612.50,875.51 1614.00,875.25 1615.50,874.98 1617.00,874.71 1618.50,874.43 1620.00,874.14 1621.50,873.84 1623.00,873.53 1624.50,873.22 1626.00,872.90 1627.50,872.57 1629.00,872.23 1630.50,871.89 1632.00,871.54 1633.50,871.18 1635.00,870.82 1636.50,870.45 1638.00,870.07 1639.50,869.68 1641.00,869.29 1642.50,868.89 1644.00,868.48 1645.50,868.07 1647.00,867.65 1648.50,867.23 1650.00,866.79 1651.50,866.36 1653.00,865.91 1654.50,865.46 1656.00,865.01 1657.50,864.55 1659.00,864.08 1660.50,863.61 1662.00,863.13 1663.50,862.65 1665.00,862.17 1666.50,861.68 1668.00,861.19 1669.50,860.69 1671.00,860.19 1672.50,859.69 1674.00,859.19 1675.50,858.68 1677.00,858.17 1678.50,857.66 1680.00,857.14 1681.50,856.63 1683.00,856.11 1684.50,855.59 1686.00,855.07 1687.50,854.55 1689.00,854.03 1690.50,853.51 1692.00,852.99 1693.50,852.47 1695.00,851.95 1696.50,851.43 1698.00,850.91 1699.50,850.40 1701.00,849.88 1702.50,849.37 1704.00,848.85 1705.50,848.34 1707.00,847.83 1708.50,847.33 1710.00,846.82 1711.50,846.32 1713.00,845.83 1714.50,845.33 1716.00,844.84 1717.50,844.36 1719.00,843.88 1720.50,843.40 1722.00,842.93 1723.50,842.46 1725.00,841.99 1726.50,841.54 1728.00,841.08 1729.50,840.64 1731.00,840.20 1732.50,839.76 1734.00,839.33 1735.50,838.91 1737.00,838.50 1738.50,838.09 1740.00,837.69 1741.50,837.30 1743.00,836.91 1744.50,836.54 1746.00,836.17 1747.50,835.81 1749.00,835.46 1750.50,835.12 1752.00,834.78 1753.50,834.46 1755.00,834.15 1756.50,833.84 1758.00,833.55 1759.50,833.27 1761.00,832.99 1762.50,832.73 1764.00,832.48 1765.50,832.24 1767.00,832.02 1768.50,831.80 1770.00,831.60 1771.50,831.40 1773.00,831.22 1774.50,831.06 1776.00,830.90 1777.50,830.75 1779.00,830.62 1780.50,830.49 1782.00,830.38 1783.50,830.28 1785.00,830.19 1786.50,830.10 1788.00,830.03 1789.50,829.97 1791.00,829.91 1792.50,829.87 1794.00,829.83 1795.50,829.80 1797.00,829.78 1798.50,829.77 1800.00,829.77 1801.50,829.77 1803.00,829.78 1804.50,829.80 1806.00,829.83 1807.50,829.86 1809.00,829.90 1810.50,829.95 1812.00,830.00 1813.50,830.06 1815.00,830.12 1816.50,830.19 1818.00,830.27 1819.50,830.35 1821.00,830.43 1822.50,830.52 1824.00,830.62 1825.50,830.71 1827.00,830.82 1828.50,830.92 1830.00,831.03 1831.50,831.15 1833.00,831.26 1834.50,831.38 1836.00,831.50 1837.50,831.63 1839.00,831.75 1840.50,831.88 1842.00,832.01 1843.50,832.15 1845.00,832.28 1846.50,832.41 1848.00,832.55 1849.50,832.69 1851.00,832.82 1852.50,832.96 1854.00,833.10" fill="none" stroke="#00ff00" stroke-width="1" shape-rendering="crispEdges" stroke-dasharray="1.3 1.5"/>
</svg>
</svg>
</body></html>
